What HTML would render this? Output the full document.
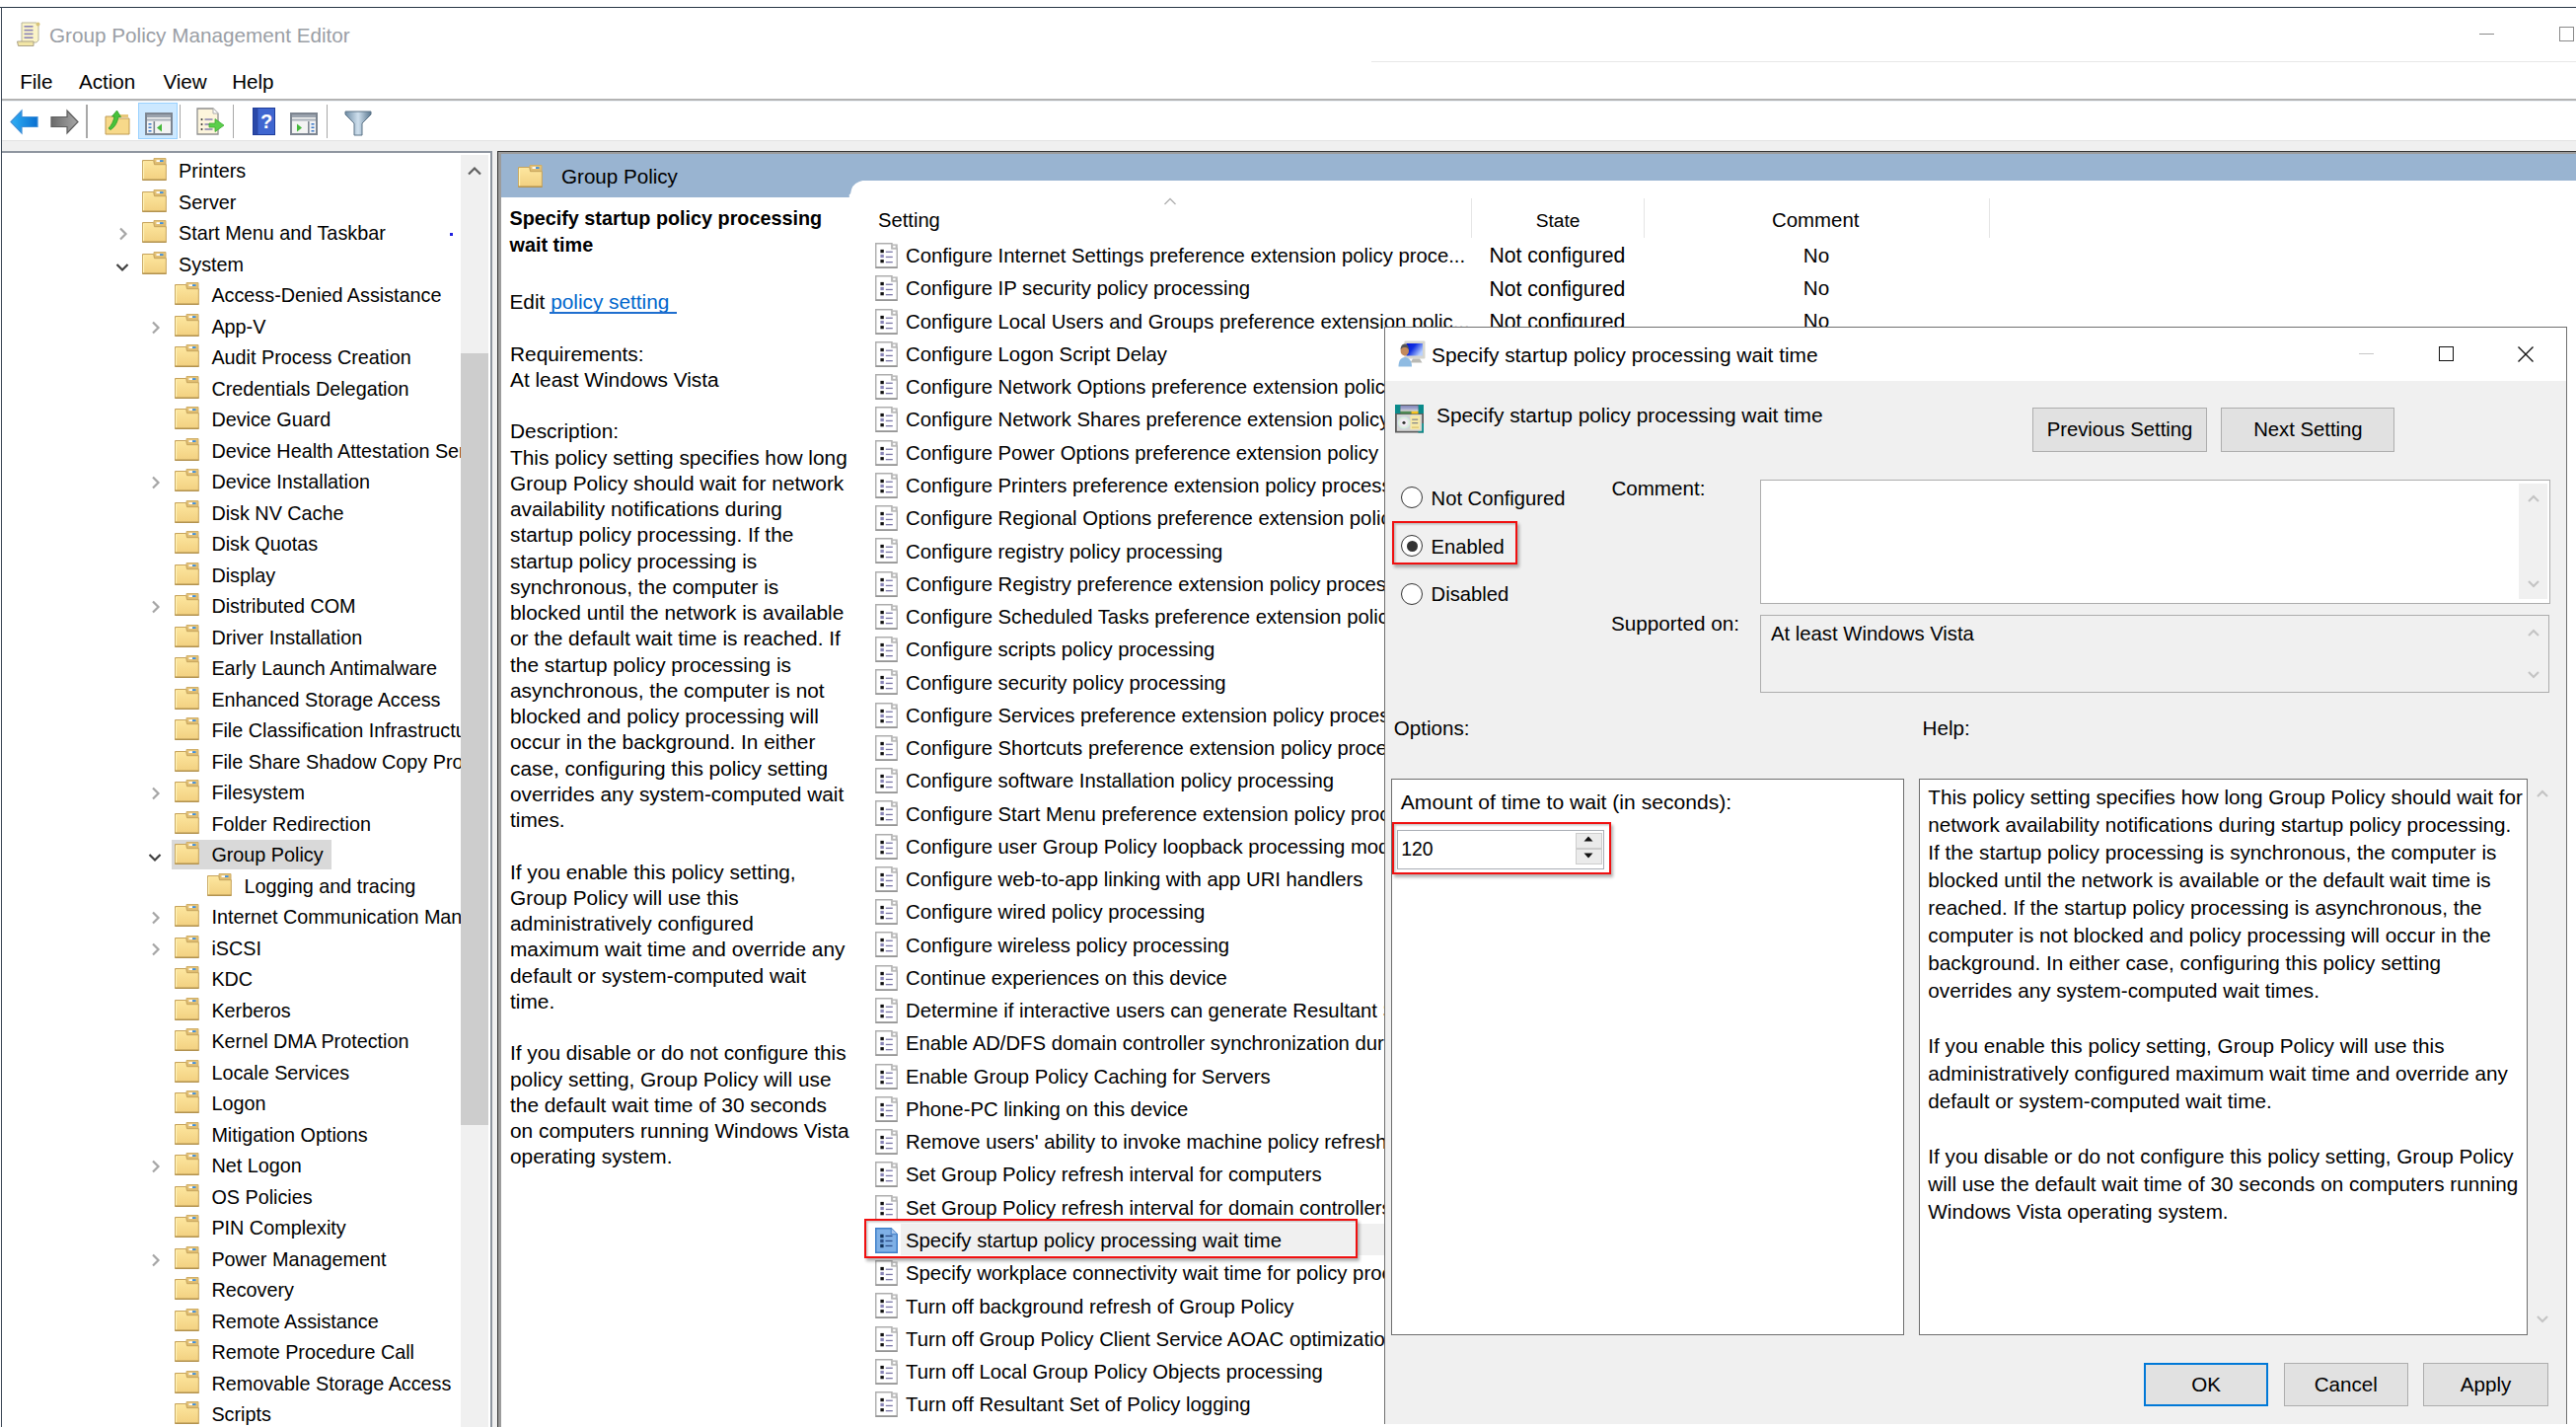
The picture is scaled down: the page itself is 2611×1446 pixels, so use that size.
<!DOCTYPE html>
<html><head><meta charset="utf-8"><style>
html,body{margin:0;padding:0;}
body{width:2611px;height:1446px;overflow:hidden;position:relative;background:#fff;font-family:"Liberation Sans", sans-serif;}
body div{position:absolute;}
.t{white-space:nowrap;}
.btn{background:#e1e1e1;box-sizing:border-box;text-align:center;color:#000;}
</style></head><body>

<svg width="0" height="0" style="position:absolute">
<defs>
<linearGradient id="fg" x1="0" y1="0" x2="0" y2="1"><stop offset="0" stop-color="#fde7a0"/><stop offset="1" stop-color="#f2d080"/></linearGradient>
<linearGradient id="ft" x1="0" y1="0" x2="0" y2="1"><stop offset="0" stop-color="#e9c77c"/><stop offset="1" stop-color="#d9b66a"/></linearGradient>
<symbol id="fold" viewBox="0 0 25 23">
 <path d="M12 0.5h12v8h-12z" fill="url(#ft)" stroke="#cfae68"/>
 <rect x="14.5" y="2.2" width="4" height="1.8" fill="#fff"/><rect x="18" y="2.2" width="3.5" height="1.8" fill="#3d8fe0"/>
 <path d="M0.5 2.5h11.2l0.8 4.2h11.8v15.8h-23.8z" fill="url(#fg)" stroke="#c6a35c"/>
 <path d="M1.5 4v17.5" stroke="#fff3b8" stroke-width="1.2"/>
 <path d="M0.5 22.2h24" stroke="#b0904f" stroke-width="1.4"/>
</symbol>
<symbol id="doc" viewBox="0 0 23 26">
 <path d="M0.75 0.75H17V5.8H22.25V25.25H0.75Z" fill="#fff" stroke="#adadad" stroke-width="1.4"/>
 <rect x="16.2" y="1.4" width="6.6" height="5" fill="#bababa"/><rect x="18.2" y="2.9" width="2.4" height="2" fill="#fff"/>
 <path d="M0.75 25.1h21.5" stroke="#929292" stroke-width="1.6"/>
 <rect x="5.4" y="6.9" width="3.4" height="3.3" fill="#111"/>
 <rect x="5.4" y="11.9" width="3.4" height="3.2" fill="#8a86b8"/>
 <rect x="5.4" y="17.1" width="3.4" height="3.2" fill="#111"/>
 <rect x="10.8" y="8.6" width="7" height="1.3" fill="#7c78a8"/>
 <rect x="10.8" y="13.8" width="7" height="1.3" fill="#7c78a8"/>
 <rect x="10.8" y="19" width="7" height="1.3" fill="#7c78a8"/>
</symbol>
<symbol id="docsel" viewBox="0 0 23 26">
 <path d="M0.75 0.75h15.5l6 6v18.5h-21.5z" fill="#7fb0e6" stroke="#3f7fc9" stroke-width="1.5"/>
 <path d="M16.2 0.75v5.8h6" fill="#a9c8ee" stroke="#4f88cc" stroke-width="1.2"/>
 <rect x="5.2" y="6.8" width="3.4" height="3.4" fill="#12325a"/>
 <rect x="5.2" y="11.8" width="3.4" height="3.4" fill="#2a4f88"/>
 <rect x="5.2" y="16.8" width="3.4" height="3.4" fill="#12325a"/>
 <rect x="10.5" y="7.8" width="7" height="1.3" fill="#2e4f8c"/>
 <rect x="10.5" y="12.8" width="7" height="1.3" fill="#2e4f8c"/>
 <rect x="10.5" y="17.8" width="7" height="1.3" fill="#2e4f8c"/>
</symbol>
<symbol id="chevR" viewBox="0 0 10 14"><path d="M2 1.5l5.5 5.5l-5.5 5.5" fill="none" stroke="#a6a6a6" stroke-width="2.2"/></symbol>
<symbol id="chevD" viewBox="0 0 14 10"><path d="M1.5 2l5.5 5.5l5.5-5.5" fill="none" stroke="#404040" stroke-width="2.2"/></symbol>
<symbol id="sUp" viewBox="0 0 16 10"><path d="M2 8.5l6-6l6 6" fill="none" stroke="#606060" stroke-width="2.2"/></symbol>
<symbol id="sUpL" viewBox="0 0 16 10"><path d="M3 8l5-5l5 5" fill="none" stroke="#c4c4c4" stroke-width="2.2"/></symbol>
<symbol id="sortUp" viewBox="0 0 16 10"><path d="M2.5 8l5.5-5.5l5.5 5.5" fill="none" stroke="#b0b0b0" stroke-width="1.3"/></symbol>
<symbol id="sDnL" viewBox="0 0 16 10"><path d="M3 2l5 5l5-5" fill="none" stroke="#c4c4c4" stroke-width="2.2"/></symbol>
</defs></svg>

<div style="left:0px;top:7px;width:2611px;height:1px;background:#2a3746"></div><div style="left:1px;top:7px;width:1px;height:1439px;background:#3a4654"></div><svg style="position:absolute;left:16px;top:21px;" width="27" height="27" viewBox="0 0 27 27">
<path d="M6 2h15l2 2v16l-2 2H6z" fill="#fbf4c8" stroke="#b9b59a" stroke-width="1"/>
<rect x="8.5" y="5" width="9" height="1.6" fill="#8b84b8"/><rect x="8.5" y="8.8" width="9" height="1.6" fill="#8b84b8"/>
<rect x="8.5" y="12.6" width="9" height="1.6" fill="#8b84b8"/><rect x="8.5" y="16.4" width="9" height="1.6" fill="#8b84b8"/>
<path d="M1.5 21h16.5v4.5H2.5z" fill="#f2e6a6" stroke="#aaa086" stroke-width="1"/>
<circle cx="22.5" cy="3.5" r="2" fill="#d8c47a"/>
</svg><div class="t" style="left:50px;top:23.91px;font-size:20.7px;line-height:24.84px;color:#9a9ea5;font-weight:400;">Group Policy Management Editor</div><div style="left:2513px;top:34px;width:15px;height:1px;background:#8a8a8a"></div><div style="left:2594px;top:27px;width:15px;height:15px;border:1.1px solid #8a8a8a;box-sizing:border-box"></div><div style="left:1390px;top:62px;width:1221px;height:1px;background:#e8e8e8"></div><div class="t" style="left:20.2px;top:70.50px;font-size:20.6px;line-height:24.72px;color:#000;font-weight:400;">File</div><div class="t" style="left:80px;top:70.50px;font-size:20.6px;line-height:24.72px;color:#000;font-weight:400;">Action</div><div class="t" style="left:165.4px;top:70.50px;font-size:20.6px;line-height:24.72px;color:#000;font-weight:400;">View</div><div class="t" style="left:235.2px;top:70.50px;font-size:20.6px;line-height:24.72px;color:#000;font-weight:400;">Help</div><div style="left:2px;top:100.3px;width:2609px;height:1.6px;background:#b3b3b3"></div><div style="left:2px;top:101.9px;width:2609px;height:1px;background:#eef2f8"></div><div style="left:140px;top:104px;width:40px;height:37px;background:#cce8ff;border:1px solid #99d1ff;box-sizing:border-box"></div><div style="left:87.25px;top:106px;width:1.5px;height:34px;background:#a8a8a8"></div><div style="left:181.75px;top:106px;width:1.5px;height:34px;background:#a8a8a8"></div><div style="left:235.95px;top:106px;width:1.5px;height:34px;background:#a8a8a8"></div><div style="left:330.65px;top:106px;width:1.5px;height:34px;background:#a8a8a8"></div><svg style="position:absolute;left:10px;top:110px;" width="30" height="27" viewBox="0 0 30 27"><defs><linearGradient id="ba" x1="0" y1="0" x2="1" y2="0"><stop offset="0" stop-color="#2fb0f5"/><stop offset="1" stop-color="#0a6fd0"/></linearGradient></defs>
<path d="M1 13.5L12 2v6.5h16v10H12V25z" fill="url(#ba)" stroke="#3f8fd8" stroke-width="1.2"/></svg><svg style="position:absolute;left:50px;top:110px;" width="30" height="27" viewBox="0 0 30 27"><defs><linearGradient id="fa" x1="0" y1="0" x2="1" y2="0"><stop offset="0" stop-color="#6a6a6a"/><stop offset="1" stop-color="#a8a8a8"/></linearGradient></defs>
<path d="M29 13.5L18 2v6.5H2v10h16V25z" fill="url(#fa)" stroke="#5f5f5f" stroke-width="1.2"/></svg><svg style="position:absolute;left:106px;top:111px;" width="26" height="27" viewBox="0 0 26 27"><path d="M1 7h9l1 2h14v16H1z" fill="#f7d98a" stroke="#bf9a52"/><rect x="14" y="5" width="10" height="3" fill="#e8c77a"/>
<path d="M4 19c3-3 5-7 6-12l-2.5 0l5-6l4 6.5h-2.5c-1 5-3 10-8 13z" fill="#47c23a" stroke="#2e9a26" stroke-width="0.8"/></svg><svg style="position:absolute;left:147px;top:114px;" width="28" height="23" viewBox="0 0 28 23"><rect x="1" y="1" width="26" height="21" fill="#f3f3f3" stroke="#7d8590" stroke-width="2"/>
<rect x="2" y="2" width="24" height="3" fill="#9aa2ad"/><rect x="2" y="6.5" width="24" height="2" fill="#aab1ba"/><rect x="8.5" y="9" width="1.6" height="12" fill="#7d8590"/><rect x="3.5" y="11" width="3" height="1.5" fill="#3a78c8"/><rect x="3.5" y="14.5" width="3" height="1.5" fill="#3a78c8"/><rect x="3.5" y="18" width="3" height="1.5" fill="#3a78c8"/><path d="M17 11.5v8l-5-4z" fill="#44b83a"/></svg><svg style="position:absolute;left:294px;top:114px;" width="28" height="23" viewBox="0 0 28 23"><rect x="1" y="1" width="26" height="21" fill="#f3f3f3" stroke="#7d8590" stroke-width="2"/>
<rect x="2" y="2" width="24" height="3" fill="#9aa2ad"/><rect x="2" y="6.5" width="24" height="2" fill="#aab1ba"/><rect x="18" y="9" width="1.6" height="12" fill="#7d8590"/><rect x="21.5" y="11" width="3" height="1.5" fill="#3a78c8"/><rect x="21.5" y="14.5" width="3" height="1.5" fill="#3a78c8"/><rect x="21.5" y="18" width="3" height="1.5" fill="#3a78c8"/><path d="M7 11.5v8l5-4z" fill="#44b83a"/></svg><svg style="position:absolute;left:199px;top:109px;" width="30" height="28" viewBox="0 0 30 28"><path d="M1 1h16l5 5v21H1z" fill="#fdf5dc" stroke="#8f8f8f" stroke-width="1.3"/><path d="M17 1v5h5" fill="#fff" stroke="#aaa"/>
<circle cx="5.5" cy="12" r="1" fill="#333"/><circle cx="5.5" cy="17" r="1" fill="#333"/><circle cx="5.5" cy="22" r="1" fill="#333"/>
<rect x="8.5" y="11.3" width="8" height="1.4" fill="#7c78a8"/><rect x="8.5" y="16.3" width="8" height="1.4" fill="#7c78a8"/><rect x="8.5" y="21.3" width="8" height="1.4" fill="#7c78a8"/>
<path d="M13 16h6v-4.5l9 6.5l-9 6.5V20h-6z" fill="#5ccf4c" stroke="#3aa82e" stroke-width="0.8"/></svg><svg style="position:absolute;left:256px;top:109px;" width="23" height="28" viewBox="0 0 23 28"><rect x="0.5" y="0.5" width="22" height="27" fill="#3f66d0" stroke="#1f3d9a"/><rect x="1" y="1" width="4.5" height="26" fill="#2a48a8"/>
<text x="14" y="21" font-family="Liberation Sans" font-size="20" font-weight="700" fill="#fff" text-anchor="middle">?</text></svg><svg style="position:absolute;left:349px;top:112px;" width="28" height="26" viewBox="0 0 28 26"><defs><linearGradient id="fl" x1="0" y1="0" x2="1" y2="0"><stop offset="0" stop-color="#6e8ca4"/><stop offset="0.5" stop-color="#cfe0ee"/><stop offset="1" stop-color="#5a7890"/></linearGradient></defs>
<path d="M1 1h26v3l-9 9v12h-8V13L1 4z" fill="url(#fl)" stroke="#5b7286" stroke-width="1"/></svg><div style="left:2px;top:142px;width:2609px;height:1px;background:#e3e3e3"></div><div style="left:2px;top:143px;width:2609px;height:10px;background:#f0f0f0"></div><div style="left:2px;top:153px;width:497px;height:2px;background:#8f96a0"></div><div style="left:497px;top:153px;width:2px;height:1293px;background:#8f96a0"></div><div style="left:499px;top:153px;width:5px;height:1293px;background:#f0f0f0"></div><div style="left:467px;top:157px;width:28px;height:1289px;background:#f0f0f0"></div><svg style="position:absolute;left:472.5px;top:167.5px" width="16" height="10" viewBox="0 0 16 10"><path d="M2 8.5l6-6l6 6" fill="none" stroke="#606060" stroke-width="2.2"/></svg><div style="left:467px;top:357.5px;width:28px;height:782.5px;background:#cdcdcd"></div><div style="left:456px;top:235.5px;width:3px;height:3px;background:#2020e0"></div><div style="left:2px;top:155px;width:465px;height:1291px;overflow:hidden"><svg style="position:absolute;left:141.7px;top:5.0px" width="25" height="23" viewBox="0 0 25 23"><path d="M12 0.5h12v8h-12z" fill="url(#ft)" stroke="#cfae68"/>
 <rect x="14.5" y="2.2" width="4" height="1.8" fill="#fff"/><rect x="18" y="2.2" width="3.5" height="1.8" fill="#3d8fe0"/>
 <path d="M0.5 2.5h11.2l0.8 4.2h11.8v15.8h-23.8z" fill="url(#fg)" stroke="#c6a35c"/>
 <path d="M1.5 4v17.5" stroke="#fff3b8" stroke-width="1.2"/>
 <path d="M0.5 22.2h24" stroke="#b0904f" stroke-width="1.4"/></svg><div class="t" style="left:179.1px;top:7.26px;font-size:19.8px;line-height:23.76px;color:#000;font-weight:400;">Printers</div><svg style="position:absolute;left:141.7px;top:36.5px" width="25" height="23" viewBox="0 0 25 23"><path d="M12 0.5h12v8h-12z" fill="url(#ft)" stroke="#cfae68"/>
 <rect x="14.5" y="2.2" width="4" height="1.8" fill="#fff"/><rect x="18" y="2.2" width="3.5" height="1.8" fill="#3d8fe0"/>
 <path d="M0.5 2.5h11.2l0.8 4.2h11.8v15.8h-23.8z" fill="url(#fg)" stroke="#c6a35c"/>
 <path d="M1.5 4v17.5" stroke="#fff3b8" stroke-width="1.2"/>
 <path d="M0.5 22.2h24" stroke="#b0904f" stroke-width="1.4"/></svg><div class="t" style="left:179.1px;top:38.76px;font-size:19.8px;line-height:23.76px;color:#000;font-weight:400;">Server</div><svg style="position:absolute;left:141.7px;top:68.0px" width="25" height="23" viewBox="0 0 25 23"><path d="M12 0.5h12v8h-12z" fill="url(#ft)" stroke="#cfae68"/>
 <rect x="14.5" y="2.2" width="4" height="1.8" fill="#fff"/><rect x="18" y="2.2" width="3.5" height="1.8" fill="#3d8fe0"/>
 <path d="M0.5 2.5h11.2l0.8 4.2h11.8v15.8h-23.8z" fill="url(#fg)" stroke="#c6a35c"/>
 <path d="M1.5 4v17.5" stroke="#fff3b8" stroke-width="1.2"/>
 <path d="M0.5 22.2h24" stroke="#b0904f" stroke-width="1.4"/></svg><div class="t" style="left:179.1px;top:70.26px;font-size:19.8px;line-height:23.76px;color:#000;font-weight:400;">Start Menu and Taskbar</div><svg style="position:absolute;left:117.49999999999999px;top:75.0px" width="10" height="14" viewBox="0 0 10 14"><path d="M2 1.5l5.5 5.5l-5.5 5.5" fill="none" stroke="#a6a6a6" stroke-width="2.2"/></svg><svg style="position:absolute;left:141.7px;top:99.5px" width="25" height="23" viewBox="0 0 25 23"><path d="M12 0.5h12v8h-12z" fill="url(#ft)" stroke="#cfae68"/>
 <rect x="14.5" y="2.2" width="4" height="1.8" fill="#fff"/><rect x="18" y="2.2" width="3.5" height="1.8" fill="#3d8fe0"/>
 <path d="M0.5 2.5h11.2l0.8 4.2h11.8v15.8h-23.8z" fill="url(#fg)" stroke="#c6a35c"/>
 <path d="M1.5 4v17.5" stroke="#fff3b8" stroke-width="1.2"/>
 <path d="M0.5 22.2h24" stroke="#b0904f" stroke-width="1.4"/></svg><div class="t" style="left:179.1px;top:101.76px;font-size:19.8px;line-height:23.76px;color:#000;font-weight:400;">System</div><svg style="position:absolute;left:114.49999999999999px;top:110.5px" width="14" height="10" viewBox="0 0 14 10"><path d="M1.5 2l5.5 5.5l5.5-5.5" fill="none" stroke="#404040" stroke-width="2.2"/></svg><svg style="position:absolute;left:175px;top:131.0px" width="25" height="23" viewBox="0 0 25 23"><path d="M12 0.5h12v8h-12z" fill="url(#ft)" stroke="#cfae68"/>
 <rect x="14.5" y="2.2" width="4" height="1.8" fill="#fff"/><rect x="18" y="2.2" width="3.5" height="1.8" fill="#3d8fe0"/>
 <path d="M0.5 2.5h11.2l0.8 4.2h11.8v15.8h-23.8z" fill="url(#fg)" stroke="#c6a35c"/>
 <path d="M1.5 4v17.5" stroke="#fff3b8" stroke-width="1.2"/>
 <path d="M0.5 22.2h24" stroke="#b0904f" stroke-width="1.4"/></svg><div class="t" style="left:212.4px;top:133.26px;font-size:19.8px;line-height:23.76px;color:#000;font-weight:400;">Access-Denied Assistance</div><svg style="position:absolute;left:175px;top:162.5px" width="25" height="23" viewBox="0 0 25 23"><path d="M12 0.5h12v8h-12z" fill="url(#ft)" stroke="#cfae68"/>
 <rect x="14.5" y="2.2" width="4" height="1.8" fill="#fff"/><rect x="18" y="2.2" width="3.5" height="1.8" fill="#3d8fe0"/>
 <path d="M0.5 2.5h11.2l0.8 4.2h11.8v15.8h-23.8z" fill="url(#fg)" stroke="#c6a35c"/>
 <path d="M1.5 4v17.5" stroke="#fff3b8" stroke-width="1.2"/>
 <path d="M0.5 22.2h24" stroke="#b0904f" stroke-width="1.4"/></svg><div class="t" style="left:212.4px;top:164.76px;font-size:19.8px;line-height:23.76px;color:#000;font-weight:400;">App-V</div><svg style="position:absolute;left:150.8px;top:169.5px" width="10" height="14" viewBox="0 0 10 14"><path d="M2 1.5l5.5 5.5l-5.5 5.5" fill="none" stroke="#a6a6a6" stroke-width="2.2"/></svg><svg style="position:absolute;left:175px;top:194.0px" width="25" height="23" viewBox="0 0 25 23"><path d="M12 0.5h12v8h-12z" fill="url(#ft)" stroke="#cfae68"/>
 <rect x="14.5" y="2.2" width="4" height="1.8" fill="#fff"/><rect x="18" y="2.2" width="3.5" height="1.8" fill="#3d8fe0"/>
 <path d="M0.5 2.5h11.2l0.8 4.2h11.8v15.8h-23.8z" fill="url(#fg)" stroke="#c6a35c"/>
 <path d="M1.5 4v17.5" stroke="#fff3b8" stroke-width="1.2"/>
 <path d="M0.5 22.2h24" stroke="#b0904f" stroke-width="1.4"/></svg><div class="t" style="left:212.4px;top:196.26px;font-size:19.8px;line-height:23.76px;color:#000;font-weight:400;">Audit Process Creation</div><svg style="position:absolute;left:175px;top:225.5px" width="25" height="23" viewBox="0 0 25 23"><path d="M12 0.5h12v8h-12z" fill="url(#ft)" stroke="#cfae68"/>
 <rect x="14.5" y="2.2" width="4" height="1.8" fill="#fff"/><rect x="18" y="2.2" width="3.5" height="1.8" fill="#3d8fe0"/>
 <path d="M0.5 2.5h11.2l0.8 4.2h11.8v15.8h-23.8z" fill="url(#fg)" stroke="#c6a35c"/>
 <path d="M1.5 4v17.5" stroke="#fff3b8" stroke-width="1.2"/>
 <path d="M0.5 22.2h24" stroke="#b0904f" stroke-width="1.4"/></svg><div class="t" style="left:212.4px;top:227.76px;font-size:19.8px;line-height:23.76px;color:#000;font-weight:400;">Credentials Delegation</div><svg style="position:absolute;left:175px;top:257.0px" width="25" height="23" viewBox="0 0 25 23"><path d="M12 0.5h12v8h-12z" fill="url(#ft)" stroke="#cfae68"/>
 <rect x="14.5" y="2.2" width="4" height="1.8" fill="#fff"/><rect x="18" y="2.2" width="3.5" height="1.8" fill="#3d8fe0"/>
 <path d="M0.5 2.5h11.2l0.8 4.2h11.8v15.8h-23.8z" fill="url(#fg)" stroke="#c6a35c"/>
 <path d="M1.5 4v17.5" stroke="#fff3b8" stroke-width="1.2"/>
 <path d="M0.5 22.2h24" stroke="#b0904f" stroke-width="1.4"/></svg><div class="t" style="left:212.4px;top:259.26px;font-size:19.8px;line-height:23.76px;color:#000;font-weight:400;">Device Guard</div><svg style="position:absolute;left:175px;top:288.5px" width="25" height="23" viewBox="0 0 25 23"><path d="M12 0.5h12v8h-12z" fill="url(#ft)" stroke="#cfae68"/>
 <rect x="14.5" y="2.2" width="4" height="1.8" fill="#fff"/><rect x="18" y="2.2" width="3.5" height="1.8" fill="#3d8fe0"/>
 <path d="M0.5 2.5h11.2l0.8 4.2h11.8v15.8h-23.8z" fill="url(#fg)" stroke="#c6a35c"/>
 <path d="M1.5 4v17.5" stroke="#fff3b8" stroke-width="1.2"/>
 <path d="M0.5 22.2h24" stroke="#b0904f" stroke-width="1.4"/></svg><div class="t" style="left:212.4px;top:290.76px;font-size:19.8px;line-height:23.76px;color:#000;font-weight:400;">Device Health Attestation Service</div><svg style="position:absolute;left:175px;top:320.0px" width="25" height="23" viewBox="0 0 25 23"><path d="M12 0.5h12v8h-12z" fill="url(#ft)" stroke="#cfae68"/>
 <rect x="14.5" y="2.2" width="4" height="1.8" fill="#fff"/><rect x="18" y="2.2" width="3.5" height="1.8" fill="#3d8fe0"/>
 <path d="M0.5 2.5h11.2l0.8 4.2h11.8v15.8h-23.8z" fill="url(#fg)" stroke="#c6a35c"/>
 <path d="M1.5 4v17.5" stroke="#fff3b8" stroke-width="1.2"/>
 <path d="M0.5 22.2h24" stroke="#b0904f" stroke-width="1.4"/></svg><div class="t" style="left:212.4px;top:322.26px;font-size:19.8px;line-height:23.76px;color:#000;font-weight:400;">Device Installation</div><svg style="position:absolute;left:150.8px;top:327.0px" width="10" height="14" viewBox="0 0 10 14"><path d="M2 1.5l5.5 5.5l-5.5 5.5" fill="none" stroke="#a6a6a6" stroke-width="2.2"/></svg><svg style="position:absolute;left:175px;top:351.5px" width="25" height="23" viewBox="0 0 25 23"><path d="M12 0.5h12v8h-12z" fill="url(#ft)" stroke="#cfae68"/>
 <rect x="14.5" y="2.2" width="4" height="1.8" fill="#fff"/><rect x="18" y="2.2" width="3.5" height="1.8" fill="#3d8fe0"/>
 <path d="M0.5 2.5h11.2l0.8 4.2h11.8v15.8h-23.8z" fill="url(#fg)" stroke="#c6a35c"/>
 <path d="M1.5 4v17.5" stroke="#fff3b8" stroke-width="1.2"/>
 <path d="M0.5 22.2h24" stroke="#b0904f" stroke-width="1.4"/></svg><div class="t" style="left:212.4px;top:353.76px;font-size:19.8px;line-height:23.76px;color:#000;font-weight:400;">Disk NV Cache</div><svg style="position:absolute;left:175px;top:383.0px" width="25" height="23" viewBox="0 0 25 23"><path d="M12 0.5h12v8h-12z" fill="url(#ft)" stroke="#cfae68"/>
 <rect x="14.5" y="2.2" width="4" height="1.8" fill="#fff"/><rect x="18" y="2.2" width="3.5" height="1.8" fill="#3d8fe0"/>
 <path d="M0.5 2.5h11.2l0.8 4.2h11.8v15.8h-23.8z" fill="url(#fg)" stroke="#c6a35c"/>
 <path d="M1.5 4v17.5" stroke="#fff3b8" stroke-width="1.2"/>
 <path d="M0.5 22.2h24" stroke="#b0904f" stroke-width="1.4"/></svg><div class="t" style="left:212.4px;top:385.26px;font-size:19.8px;line-height:23.76px;color:#000;font-weight:400;">Disk Quotas</div><svg style="position:absolute;left:175px;top:414.5px" width="25" height="23" viewBox="0 0 25 23"><path d="M12 0.5h12v8h-12z" fill="url(#ft)" stroke="#cfae68"/>
 <rect x="14.5" y="2.2" width="4" height="1.8" fill="#fff"/><rect x="18" y="2.2" width="3.5" height="1.8" fill="#3d8fe0"/>
 <path d="M0.5 2.5h11.2l0.8 4.2h11.8v15.8h-23.8z" fill="url(#fg)" stroke="#c6a35c"/>
 <path d="M1.5 4v17.5" stroke="#fff3b8" stroke-width="1.2"/>
 <path d="M0.5 22.2h24" stroke="#b0904f" stroke-width="1.4"/></svg><div class="t" style="left:212.4px;top:416.76px;font-size:19.8px;line-height:23.76px;color:#000;font-weight:400;">Display</div><svg style="position:absolute;left:175px;top:446.0px" width="25" height="23" viewBox="0 0 25 23"><path d="M12 0.5h12v8h-12z" fill="url(#ft)" stroke="#cfae68"/>
 <rect x="14.5" y="2.2" width="4" height="1.8" fill="#fff"/><rect x="18" y="2.2" width="3.5" height="1.8" fill="#3d8fe0"/>
 <path d="M0.5 2.5h11.2l0.8 4.2h11.8v15.8h-23.8z" fill="url(#fg)" stroke="#c6a35c"/>
 <path d="M1.5 4v17.5" stroke="#fff3b8" stroke-width="1.2"/>
 <path d="M0.5 22.2h24" stroke="#b0904f" stroke-width="1.4"/></svg><div class="t" style="left:212.4px;top:448.26px;font-size:19.8px;line-height:23.76px;color:#000;font-weight:400;">Distributed COM</div><svg style="position:absolute;left:150.8px;top:453.0px" width="10" height="14" viewBox="0 0 10 14"><path d="M2 1.5l5.5 5.5l-5.5 5.5" fill="none" stroke="#a6a6a6" stroke-width="2.2"/></svg><svg style="position:absolute;left:175px;top:477.5px" width="25" height="23" viewBox="0 0 25 23"><path d="M12 0.5h12v8h-12z" fill="url(#ft)" stroke="#cfae68"/>
 <rect x="14.5" y="2.2" width="4" height="1.8" fill="#fff"/><rect x="18" y="2.2" width="3.5" height="1.8" fill="#3d8fe0"/>
 <path d="M0.5 2.5h11.2l0.8 4.2h11.8v15.8h-23.8z" fill="url(#fg)" stroke="#c6a35c"/>
 <path d="M1.5 4v17.5" stroke="#fff3b8" stroke-width="1.2"/>
 <path d="M0.5 22.2h24" stroke="#b0904f" stroke-width="1.4"/></svg><div class="t" style="left:212.4px;top:479.76px;font-size:19.8px;line-height:23.76px;color:#000;font-weight:400;">Driver Installation</div><svg style="position:absolute;left:175px;top:509.0px" width="25" height="23" viewBox="0 0 25 23"><path d="M12 0.5h12v8h-12z" fill="url(#ft)" stroke="#cfae68"/>
 <rect x="14.5" y="2.2" width="4" height="1.8" fill="#fff"/><rect x="18" y="2.2" width="3.5" height="1.8" fill="#3d8fe0"/>
 <path d="M0.5 2.5h11.2l0.8 4.2h11.8v15.8h-23.8z" fill="url(#fg)" stroke="#c6a35c"/>
 <path d="M1.5 4v17.5" stroke="#fff3b8" stroke-width="1.2"/>
 <path d="M0.5 22.2h24" stroke="#b0904f" stroke-width="1.4"/></svg><div class="t" style="left:212.4px;top:511.26px;font-size:19.8px;line-height:23.76px;color:#000;font-weight:400;">Early Launch Antimalware</div><svg style="position:absolute;left:175px;top:540.5px" width="25" height="23" viewBox="0 0 25 23"><path d="M12 0.5h12v8h-12z" fill="url(#ft)" stroke="#cfae68"/>
 <rect x="14.5" y="2.2" width="4" height="1.8" fill="#fff"/><rect x="18" y="2.2" width="3.5" height="1.8" fill="#3d8fe0"/>
 <path d="M0.5 2.5h11.2l0.8 4.2h11.8v15.8h-23.8z" fill="url(#fg)" stroke="#c6a35c"/>
 <path d="M1.5 4v17.5" stroke="#fff3b8" stroke-width="1.2"/>
 <path d="M0.5 22.2h24" stroke="#b0904f" stroke-width="1.4"/></svg><div class="t" style="left:212.4px;top:542.76px;font-size:19.8px;line-height:23.76px;color:#000;font-weight:400;">Enhanced Storage Access</div><svg style="position:absolute;left:175px;top:572.0px" width="25" height="23" viewBox="0 0 25 23"><path d="M12 0.5h12v8h-12z" fill="url(#ft)" stroke="#cfae68"/>
 <rect x="14.5" y="2.2" width="4" height="1.8" fill="#fff"/><rect x="18" y="2.2" width="3.5" height="1.8" fill="#3d8fe0"/>
 <path d="M0.5 2.5h11.2l0.8 4.2h11.8v15.8h-23.8z" fill="url(#fg)" stroke="#c6a35c"/>
 <path d="M1.5 4v17.5" stroke="#fff3b8" stroke-width="1.2"/>
 <path d="M0.5 22.2h24" stroke="#b0904f" stroke-width="1.4"/></svg><div class="t" style="left:212.4px;top:574.26px;font-size:19.8px;line-height:23.76px;color:#000;font-weight:400;">File Classification Infrastructure</div><svg style="position:absolute;left:175px;top:603.5px" width="25" height="23" viewBox="0 0 25 23"><path d="M12 0.5h12v8h-12z" fill="url(#ft)" stroke="#cfae68"/>
 <rect x="14.5" y="2.2" width="4" height="1.8" fill="#fff"/><rect x="18" y="2.2" width="3.5" height="1.8" fill="#3d8fe0"/>
 <path d="M0.5 2.5h11.2l0.8 4.2h11.8v15.8h-23.8z" fill="url(#fg)" stroke="#c6a35c"/>
 <path d="M1.5 4v17.5" stroke="#fff3b8" stroke-width="1.2"/>
 <path d="M0.5 22.2h24" stroke="#b0904f" stroke-width="1.4"/></svg><div class="t" style="left:212.4px;top:605.76px;font-size:19.8px;line-height:23.76px;color:#000;font-weight:400;">File Share Shadow Copy Provider</div><svg style="position:absolute;left:175px;top:635.0px" width="25" height="23" viewBox="0 0 25 23"><path d="M12 0.5h12v8h-12z" fill="url(#ft)" stroke="#cfae68"/>
 <rect x="14.5" y="2.2" width="4" height="1.8" fill="#fff"/><rect x="18" y="2.2" width="3.5" height="1.8" fill="#3d8fe0"/>
 <path d="M0.5 2.5h11.2l0.8 4.2h11.8v15.8h-23.8z" fill="url(#fg)" stroke="#c6a35c"/>
 <path d="M1.5 4v17.5" stroke="#fff3b8" stroke-width="1.2"/>
 <path d="M0.5 22.2h24" stroke="#b0904f" stroke-width="1.4"/></svg><div class="t" style="left:212.4px;top:637.26px;font-size:19.8px;line-height:23.76px;color:#000;font-weight:400;">Filesystem</div><svg style="position:absolute;left:150.8px;top:642.0px" width="10" height="14" viewBox="0 0 10 14"><path d="M2 1.5l5.5 5.5l-5.5 5.5" fill="none" stroke="#a6a6a6" stroke-width="2.2"/></svg><svg style="position:absolute;left:175px;top:666.5px" width="25" height="23" viewBox="0 0 25 23"><path d="M12 0.5h12v8h-12z" fill="url(#ft)" stroke="#cfae68"/>
 <rect x="14.5" y="2.2" width="4" height="1.8" fill="#fff"/><rect x="18" y="2.2" width="3.5" height="1.8" fill="#3d8fe0"/>
 <path d="M0.5 2.5h11.2l0.8 4.2h11.8v15.8h-23.8z" fill="url(#fg)" stroke="#c6a35c"/>
 <path d="M1.5 4v17.5" stroke="#fff3b8" stroke-width="1.2"/>
 <path d="M0.5 22.2h24" stroke="#b0904f" stroke-width="1.4"/></svg><div class="t" style="left:212.4px;top:668.76px;font-size:19.8px;line-height:23.76px;color:#000;font-weight:400;">Folder Redirection</div><div style="left:171.7px;top:695.5px;width:162.3px;height:30.7px;background:#d9d9d9"></div><svg style="position:absolute;left:175px;top:698.0px" width="25" height="23" viewBox="0 0 25 23"><path d="M12 0.5h12v8h-12z" fill="url(#ft)" stroke="#cfae68"/>
 <rect x="14.5" y="2.2" width="4" height="1.8" fill="#fff"/><rect x="18" y="2.2" width="3.5" height="1.8" fill="#3d8fe0"/>
 <path d="M0.5 2.5h11.2l0.8 4.2h11.8v15.8h-23.8z" fill="url(#fg)" stroke="#c6a35c"/>
 <path d="M1.5 4v17.5" stroke="#fff3b8" stroke-width="1.2"/>
 <path d="M0.5 22.2h24" stroke="#b0904f" stroke-width="1.4"/></svg><div class="t" style="left:212.4px;top:700.26px;font-size:19.8px;line-height:23.76px;color:#000;font-weight:400;">Group Policy</div><svg style="position:absolute;left:147.8px;top:709.0px" width="14" height="10" viewBox="0 0 14 10"><path d="M1.5 2l5.5 5.5l5.5-5.5" fill="none" stroke="#404040" stroke-width="2.2"/></svg><svg style="position:absolute;left:208px;top:729.5px" width="25" height="23" viewBox="0 0 25 23"><path d="M12 0.5h12v8h-12z" fill="url(#ft)" stroke="#cfae68"/>
 <rect x="14.5" y="2.2" width="4" height="1.8" fill="#fff"/><rect x="18" y="2.2" width="3.5" height="1.8" fill="#3d8fe0"/>
 <path d="M0.5 2.5h11.2l0.8 4.2h11.8v15.8h-23.8z" fill="url(#fg)" stroke="#c6a35c"/>
 <path d="M1.5 4v17.5" stroke="#fff3b8" stroke-width="1.2"/>
 <path d="M0.5 22.2h24" stroke="#b0904f" stroke-width="1.4"/></svg><div class="t" style="left:245.4px;top:731.76px;font-size:19.8px;line-height:23.76px;color:#000;font-weight:400;">Logging and tracing</div><svg style="position:absolute;left:175px;top:761.0px" width="25" height="23" viewBox="0 0 25 23"><path d="M12 0.5h12v8h-12z" fill="url(#ft)" stroke="#cfae68"/>
 <rect x="14.5" y="2.2" width="4" height="1.8" fill="#fff"/><rect x="18" y="2.2" width="3.5" height="1.8" fill="#3d8fe0"/>
 <path d="M0.5 2.5h11.2l0.8 4.2h11.8v15.8h-23.8z" fill="url(#fg)" stroke="#c6a35c"/>
 <path d="M1.5 4v17.5" stroke="#fff3b8" stroke-width="1.2"/>
 <path d="M0.5 22.2h24" stroke="#b0904f" stroke-width="1.4"/></svg><div class="t" style="left:212.4px;top:763.26px;font-size:19.8px;line-height:23.76px;color:#000;font-weight:400;">Internet Communication Management</div><svg style="position:absolute;left:150.8px;top:768.0px" width="10" height="14" viewBox="0 0 10 14"><path d="M2 1.5l5.5 5.5l-5.5 5.5" fill="none" stroke="#a6a6a6" stroke-width="2.2"/></svg><svg style="position:absolute;left:175px;top:792.5px" width="25" height="23" viewBox="0 0 25 23"><path d="M12 0.5h12v8h-12z" fill="url(#ft)" stroke="#cfae68"/>
 <rect x="14.5" y="2.2" width="4" height="1.8" fill="#fff"/><rect x="18" y="2.2" width="3.5" height="1.8" fill="#3d8fe0"/>
 <path d="M0.5 2.5h11.2l0.8 4.2h11.8v15.8h-23.8z" fill="url(#fg)" stroke="#c6a35c"/>
 <path d="M1.5 4v17.5" stroke="#fff3b8" stroke-width="1.2"/>
 <path d="M0.5 22.2h24" stroke="#b0904f" stroke-width="1.4"/></svg><div class="t" style="left:212.4px;top:794.76px;font-size:19.8px;line-height:23.76px;color:#000;font-weight:400;">iSCSI</div><svg style="position:absolute;left:150.8px;top:799.5px" width="10" height="14" viewBox="0 0 10 14"><path d="M2 1.5l5.5 5.5l-5.5 5.5" fill="none" stroke="#a6a6a6" stroke-width="2.2"/></svg><svg style="position:absolute;left:175px;top:824.0px" width="25" height="23" viewBox="0 0 25 23"><path d="M12 0.5h12v8h-12z" fill="url(#ft)" stroke="#cfae68"/>
 <rect x="14.5" y="2.2" width="4" height="1.8" fill="#fff"/><rect x="18" y="2.2" width="3.5" height="1.8" fill="#3d8fe0"/>
 <path d="M0.5 2.5h11.2l0.8 4.2h11.8v15.8h-23.8z" fill="url(#fg)" stroke="#c6a35c"/>
 <path d="M1.5 4v17.5" stroke="#fff3b8" stroke-width="1.2"/>
 <path d="M0.5 22.2h24" stroke="#b0904f" stroke-width="1.4"/></svg><div class="t" style="left:212.4px;top:826.26px;font-size:19.8px;line-height:23.76px;color:#000;font-weight:400;">KDC</div><svg style="position:absolute;left:175px;top:855.5px" width="25" height="23" viewBox="0 0 25 23"><path d="M12 0.5h12v8h-12z" fill="url(#ft)" stroke="#cfae68"/>
 <rect x="14.5" y="2.2" width="4" height="1.8" fill="#fff"/><rect x="18" y="2.2" width="3.5" height="1.8" fill="#3d8fe0"/>
 <path d="M0.5 2.5h11.2l0.8 4.2h11.8v15.8h-23.8z" fill="url(#fg)" stroke="#c6a35c"/>
 <path d="M1.5 4v17.5" stroke="#fff3b8" stroke-width="1.2"/>
 <path d="M0.5 22.2h24" stroke="#b0904f" stroke-width="1.4"/></svg><div class="t" style="left:212.4px;top:857.76px;font-size:19.8px;line-height:23.76px;color:#000;font-weight:400;">Kerberos</div><svg style="position:absolute;left:175px;top:887.0px" width="25" height="23" viewBox="0 0 25 23"><path d="M12 0.5h12v8h-12z" fill="url(#ft)" stroke="#cfae68"/>
 <rect x="14.5" y="2.2" width="4" height="1.8" fill="#fff"/><rect x="18" y="2.2" width="3.5" height="1.8" fill="#3d8fe0"/>
 <path d="M0.5 2.5h11.2l0.8 4.2h11.8v15.8h-23.8z" fill="url(#fg)" stroke="#c6a35c"/>
 <path d="M1.5 4v17.5" stroke="#fff3b8" stroke-width="1.2"/>
 <path d="M0.5 22.2h24" stroke="#b0904f" stroke-width="1.4"/></svg><div class="t" style="left:212.4px;top:889.26px;font-size:19.8px;line-height:23.76px;color:#000;font-weight:400;">Kernel DMA Protection</div><svg style="position:absolute;left:175px;top:918.5px" width="25" height="23" viewBox="0 0 25 23"><path d="M12 0.5h12v8h-12z" fill="url(#ft)" stroke="#cfae68"/>
 <rect x="14.5" y="2.2" width="4" height="1.8" fill="#fff"/><rect x="18" y="2.2" width="3.5" height="1.8" fill="#3d8fe0"/>
 <path d="M0.5 2.5h11.2l0.8 4.2h11.8v15.8h-23.8z" fill="url(#fg)" stroke="#c6a35c"/>
 <path d="M1.5 4v17.5" stroke="#fff3b8" stroke-width="1.2"/>
 <path d="M0.5 22.2h24" stroke="#b0904f" stroke-width="1.4"/></svg><div class="t" style="left:212.4px;top:920.76px;font-size:19.8px;line-height:23.76px;color:#000;font-weight:400;">Locale Services</div><svg style="position:absolute;left:175px;top:950.0px" width="25" height="23" viewBox="0 0 25 23"><path d="M12 0.5h12v8h-12z" fill="url(#ft)" stroke="#cfae68"/>
 <rect x="14.5" y="2.2" width="4" height="1.8" fill="#fff"/><rect x="18" y="2.2" width="3.5" height="1.8" fill="#3d8fe0"/>
 <path d="M0.5 2.5h11.2l0.8 4.2h11.8v15.8h-23.8z" fill="url(#fg)" stroke="#c6a35c"/>
 <path d="M1.5 4v17.5" stroke="#fff3b8" stroke-width="1.2"/>
 <path d="M0.5 22.2h24" stroke="#b0904f" stroke-width="1.4"/></svg><div class="t" style="left:212.4px;top:952.26px;font-size:19.8px;line-height:23.76px;color:#000;font-weight:400;">Logon</div><svg style="position:absolute;left:175px;top:981.5px" width="25" height="23" viewBox="0 0 25 23"><path d="M12 0.5h12v8h-12z" fill="url(#ft)" stroke="#cfae68"/>
 <rect x="14.5" y="2.2" width="4" height="1.8" fill="#fff"/><rect x="18" y="2.2" width="3.5" height="1.8" fill="#3d8fe0"/>
 <path d="M0.5 2.5h11.2l0.8 4.2h11.8v15.8h-23.8z" fill="url(#fg)" stroke="#c6a35c"/>
 <path d="M1.5 4v17.5" stroke="#fff3b8" stroke-width="1.2"/>
 <path d="M0.5 22.2h24" stroke="#b0904f" stroke-width="1.4"/></svg><div class="t" style="left:212.4px;top:983.76px;font-size:19.8px;line-height:23.76px;color:#000;font-weight:400;">Mitigation Options</div><svg style="position:absolute;left:175px;top:1013.0px" width="25" height="23" viewBox="0 0 25 23"><path d="M12 0.5h12v8h-12z" fill="url(#ft)" stroke="#cfae68"/>
 <rect x="14.5" y="2.2" width="4" height="1.8" fill="#fff"/><rect x="18" y="2.2" width="3.5" height="1.8" fill="#3d8fe0"/>
 <path d="M0.5 2.5h11.2l0.8 4.2h11.8v15.8h-23.8z" fill="url(#fg)" stroke="#c6a35c"/>
 <path d="M1.5 4v17.5" stroke="#fff3b8" stroke-width="1.2"/>
 <path d="M0.5 22.2h24" stroke="#b0904f" stroke-width="1.4"/></svg><div class="t" style="left:212.4px;top:1015.26px;font-size:19.8px;line-height:23.76px;color:#000;font-weight:400;">Net Logon</div><svg style="position:absolute;left:150.8px;top:1020.0px" width="10" height="14" viewBox="0 0 10 14"><path d="M2 1.5l5.5 5.5l-5.5 5.5" fill="none" stroke="#a6a6a6" stroke-width="2.2"/></svg><svg style="position:absolute;left:175px;top:1044.5px" width="25" height="23" viewBox="0 0 25 23"><path d="M12 0.5h12v8h-12z" fill="url(#ft)" stroke="#cfae68"/>
 <rect x="14.5" y="2.2" width="4" height="1.8" fill="#fff"/><rect x="18" y="2.2" width="3.5" height="1.8" fill="#3d8fe0"/>
 <path d="M0.5 2.5h11.2l0.8 4.2h11.8v15.8h-23.8z" fill="url(#fg)" stroke="#c6a35c"/>
 <path d="M1.5 4v17.5" stroke="#fff3b8" stroke-width="1.2"/>
 <path d="M0.5 22.2h24" stroke="#b0904f" stroke-width="1.4"/></svg><div class="t" style="left:212.4px;top:1046.76px;font-size:19.8px;line-height:23.76px;color:#000;font-weight:400;">OS Policies</div><svg style="position:absolute;left:175px;top:1076.0px" width="25" height="23" viewBox="0 0 25 23"><path d="M12 0.5h12v8h-12z" fill="url(#ft)" stroke="#cfae68"/>
 <rect x="14.5" y="2.2" width="4" height="1.8" fill="#fff"/><rect x="18" y="2.2" width="3.5" height="1.8" fill="#3d8fe0"/>
 <path d="M0.5 2.5h11.2l0.8 4.2h11.8v15.8h-23.8z" fill="url(#fg)" stroke="#c6a35c"/>
 <path d="M1.5 4v17.5" stroke="#fff3b8" stroke-width="1.2"/>
 <path d="M0.5 22.2h24" stroke="#b0904f" stroke-width="1.4"/></svg><div class="t" style="left:212.4px;top:1078.26px;font-size:19.8px;line-height:23.76px;color:#000;font-weight:400;">PIN Complexity</div><svg style="position:absolute;left:175px;top:1107.5px" width="25" height="23" viewBox="0 0 25 23"><path d="M12 0.5h12v8h-12z" fill="url(#ft)" stroke="#cfae68"/>
 <rect x="14.5" y="2.2" width="4" height="1.8" fill="#fff"/><rect x="18" y="2.2" width="3.5" height="1.8" fill="#3d8fe0"/>
 <path d="M0.5 2.5h11.2l0.8 4.2h11.8v15.8h-23.8z" fill="url(#fg)" stroke="#c6a35c"/>
 <path d="M1.5 4v17.5" stroke="#fff3b8" stroke-width="1.2"/>
 <path d="M0.5 22.2h24" stroke="#b0904f" stroke-width="1.4"/></svg><div class="t" style="left:212.4px;top:1109.76px;font-size:19.8px;line-height:23.76px;color:#000;font-weight:400;">Power Management</div><svg style="position:absolute;left:150.8px;top:1114.5px" width="10" height="14" viewBox="0 0 10 14"><path d="M2 1.5l5.5 5.5l-5.5 5.5" fill="none" stroke="#a6a6a6" stroke-width="2.2"/></svg><svg style="position:absolute;left:175px;top:1139.0px" width="25" height="23" viewBox="0 0 25 23"><path d="M12 0.5h12v8h-12z" fill="url(#ft)" stroke="#cfae68"/>
 <rect x="14.5" y="2.2" width="4" height="1.8" fill="#fff"/><rect x="18" y="2.2" width="3.5" height="1.8" fill="#3d8fe0"/>
 <path d="M0.5 2.5h11.2l0.8 4.2h11.8v15.8h-23.8z" fill="url(#fg)" stroke="#c6a35c"/>
 <path d="M1.5 4v17.5" stroke="#fff3b8" stroke-width="1.2"/>
 <path d="M0.5 22.2h24" stroke="#b0904f" stroke-width="1.4"/></svg><div class="t" style="left:212.4px;top:1141.26px;font-size:19.8px;line-height:23.76px;color:#000;font-weight:400;">Recovery</div><svg style="position:absolute;left:175px;top:1170.5px" width="25" height="23" viewBox="0 0 25 23"><path d="M12 0.5h12v8h-12z" fill="url(#ft)" stroke="#cfae68"/>
 <rect x="14.5" y="2.2" width="4" height="1.8" fill="#fff"/><rect x="18" y="2.2" width="3.5" height="1.8" fill="#3d8fe0"/>
 <path d="M0.5 2.5h11.2l0.8 4.2h11.8v15.8h-23.8z" fill="url(#fg)" stroke="#c6a35c"/>
 <path d="M1.5 4v17.5" stroke="#fff3b8" stroke-width="1.2"/>
 <path d="M0.5 22.2h24" stroke="#b0904f" stroke-width="1.4"/></svg><div class="t" style="left:212.4px;top:1172.76px;font-size:19.8px;line-height:23.76px;color:#000;font-weight:400;">Remote Assistance</div><svg style="position:absolute;left:175px;top:1202.0px" width="25" height="23" viewBox="0 0 25 23"><path d="M12 0.5h12v8h-12z" fill="url(#ft)" stroke="#cfae68"/>
 <rect x="14.5" y="2.2" width="4" height="1.8" fill="#fff"/><rect x="18" y="2.2" width="3.5" height="1.8" fill="#3d8fe0"/>
 <path d="M0.5 2.5h11.2l0.8 4.2h11.8v15.8h-23.8z" fill="url(#fg)" stroke="#c6a35c"/>
 <path d="M1.5 4v17.5" stroke="#fff3b8" stroke-width="1.2"/>
 <path d="M0.5 22.2h24" stroke="#b0904f" stroke-width="1.4"/></svg><div class="t" style="left:212.4px;top:1204.26px;font-size:19.8px;line-height:23.76px;color:#000;font-weight:400;">Remote Procedure Call</div><svg style="position:absolute;left:175px;top:1233.5px" width="25" height="23" viewBox="0 0 25 23"><path d="M12 0.5h12v8h-12z" fill="url(#ft)" stroke="#cfae68"/>
 <rect x="14.5" y="2.2" width="4" height="1.8" fill="#fff"/><rect x="18" y="2.2" width="3.5" height="1.8" fill="#3d8fe0"/>
 <path d="M0.5 2.5h11.2l0.8 4.2h11.8v15.8h-23.8z" fill="url(#fg)" stroke="#c6a35c"/>
 <path d="M1.5 4v17.5" stroke="#fff3b8" stroke-width="1.2"/>
 <path d="M0.5 22.2h24" stroke="#b0904f" stroke-width="1.4"/></svg><div class="t" style="left:212.4px;top:1235.76px;font-size:19.8px;line-height:23.76px;color:#000;font-weight:400;">Removable Storage Access</div><svg style="position:absolute;left:175px;top:1265.0px" width="25" height="23" viewBox="0 0 25 23"><path d="M12 0.5h12v8h-12z" fill="url(#ft)" stroke="#cfae68"/>
 <rect x="14.5" y="2.2" width="4" height="1.8" fill="#fff"/><rect x="18" y="2.2" width="3.5" height="1.8" fill="#3d8fe0"/>
 <path d="M0.5 2.5h11.2l0.8 4.2h11.8v15.8h-23.8z" fill="url(#fg)" stroke="#c6a35c"/>
 <path d="M1.5 4v17.5" stroke="#fff3b8" stroke-width="1.2"/>
 <path d="M0.5 22.2h24" stroke="#b0904f" stroke-width="1.4"/></svg><div class="t" style="left:212.4px;top:1267.26px;font-size:19.8px;line-height:23.76px;color:#000;font-weight:400;">Scripts</div></div><div style="left:504px;top:153px;width:2107px;height:1px;background:#363636"></div><div style="left:504px;top:153px;width:1px;height:1293px;background:#363636"></div><div style="left:505px;top:154px;width:2106px;height:2px;background:#9c9c9c"></div><div style="left:505px;top:154px;width:3px;height:1292px;background:#9c9c9c"></div><div style="left:508px;top:156px;width:2103px;height:27px;background:#99b4d1"></div><svg style="position:absolute;left:508px;top:182px;" width="380" height="18" viewBox="0 0 380 18"><path d="M0 0H370L367 0.8Q357 3 355 10L354 14.5L352.8 15V18H0z" fill="#99b4d1"/></svg><svg style="position:absolute;left:525px;top:167px" width="25" height="23" viewBox="0 0 25 23"><path d="M12 0.5h12v8h-12z" fill="url(#ft)" stroke="#cfae68"/>
 <rect x="14.5" y="2.2" width="4" height="1.8" fill="#fff"/><rect x="18" y="2.2" width="3.5" height="1.8" fill="#3d8fe0"/>
 <path d="M0.5 2.5h11.2l0.8 4.2h11.8v15.8h-23.8z" fill="url(#fg)" stroke="#c6a35c"/>
 <path d="M1.5 4v17.5" stroke="#fff3b8" stroke-width="1.2"/>
 <path d="M0.5 22.2h24" stroke="#b0904f" stroke-width="1.4"/></svg><div class="t" style="left:569px;top:166.50px;font-size:20.6px;line-height:24.72px;color:#000;font-weight:400;">Group Policy</div><div class="t" style="left:516.5px;top:210.26px;font-size:19.8px;line-height:23.76px;color:#000;font-weight:700;">Specify startup policy processing</div><div class="t" style="left:516.5px;top:237.06px;font-size:19.8px;line-height:23.76px;color:#000;font-weight:700;">wait time</div><div class="t" style="left:516.5px;top:293.91px;font-size:20.8px;line-height:24.96px;color:#000;font-weight:400;">Edit <span style="color:#0066cc">policy setting</span></div><div style="left:557px;top:316px;width:129px;height:1.7px;background:#1f6fcf"></div><div class="t" style="left:517px;top:345.55px;font-size:20.85px;line-height:26.25px;color:#000;">Requirements:<br>At least Windows Vista<br>&nbsp;<br>Description:<br>This policy setting specifies how long<br>Group Policy should wait for network<br>availability notifications during<br>startup policy processing. If the<br>startup policy processing is<br>synchronous, the computer is<br>blocked until the network is available<br>or the default wait time is reached. If<br>the startup policy processing is<br>asynchronous, the computer is not<br>blocked and policy processing will<br>occur in the background. In either<br>case, configuring this policy setting<br>overrides any system-computed wait<br>times.<br>&nbsp;<br>If you enable this policy setting,<br>Group Policy will use this<br>administratively configured<br>maximum wait time and override any<br>default or system-computed wait<br>time.<br>&nbsp;<br>If you disable or do not configure this<br>policy setting, Group Policy will use<br>the default wait time of 30 seconds<br>on computers running Windows Vista<br>operating system.</div><div class="t" style="left:890px;top:210.58px;font-size:20.2px;line-height:24.24px;color:#000;font-weight:400;">Setting</div><svg style="position:absolute;left:1177.5px;top:198.5px" width="16" height="10" viewBox="0 0 16 10"><path d="M2.5 8l5.5-5.5l5.5 5.5" fill="none" stroke="#b0b0b0" stroke-width="1.3"/></svg><div style="left:1491px;top:200.5px;width:1px;height:40.5px;background:#e5e5e5"></div><div style="left:1666px;top:200.5px;width:1px;height:40.5px;background:#e5e5e5"></div><div style="left:2016px;top:200.5px;width:1px;height:40.5px;background:#e5e5e5"></div><div class="t" style="left:1556.7px;top:211.83px;font-size:19.2px;line-height:23.04px;color:#000;font-weight:400;">State</div><div class="t" style="left:1796px;top:210.69px;font-size:20.4px;line-height:24.48px;color:#000;font-weight:400;">Comment</div><svg style="position:absolute;left:887px;top:245.99999999999997px" width="23" height="26" viewBox="0 0 23 26"><path d="M0.75 0.75H17V5.8H22.25V25.25H0.75Z" fill="#fff" stroke="#adadad" stroke-width="1.4"/>
 <rect x="16.2" y="1.4" width="6.6" height="5" fill="#bababa"/><rect x="18.2" y="2.9" width="2.4" height="2" fill="#fff"/>
 <path d="M0.75 25.1h21.5" stroke="#929292" stroke-width="1.6"/>
 <rect x="5.4" y="6.9" width="3.4" height="3.3" fill="#111"/>
 <rect x="5.4" y="11.9" width="3.4" height="3.2" fill="#8a86b8"/>
 <rect x="5.4" y="17.1" width="3.4" height="3.2" fill="#111"/>
 <rect x="10.8" y="8.6" width="7" height="1.3" fill="#7c78a8"/>
 <rect x="10.8" y="13.8" width="7" height="1.3" fill="#7c78a8"/>
 <rect x="10.8" y="19" width="7" height="1.3" fill="#7c78a8"/></svg><div class="t" style="left:918px;top:247.19px;font-size:20.3px;line-height:24.36px;color:#000;font-weight:400;">Configure Internet Settings preference extension policy proce...</div><div class="t" style="left:1509.4px;top:246.33px;font-size:21.2px;line-height:25.44px;color:#000;font-weight:400;">Not configured</div><div class="t" style="left:1827.8px;top:246.90px;font-size:20.6px;line-height:24.72px;color:#000;font-weight:400;">No</div><svg style="position:absolute;left:887px;top:279.26px" width="23" height="26" viewBox="0 0 23 26"><path d="M0.75 0.75H17V5.8H22.25V25.25H0.75Z" fill="#fff" stroke="#adadad" stroke-width="1.4"/>
 <rect x="16.2" y="1.4" width="6.6" height="5" fill="#bababa"/><rect x="18.2" y="2.9" width="2.4" height="2" fill="#fff"/>
 <path d="M0.75 25.1h21.5" stroke="#929292" stroke-width="1.6"/>
 <rect x="5.4" y="6.9" width="3.4" height="3.3" fill="#111"/>
 <rect x="5.4" y="11.9" width="3.4" height="3.2" fill="#8a86b8"/>
 <rect x="5.4" y="17.1" width="3.4" height="3.2" fill="#111"/>
 <rect x="10.8" y="8.6" width="7" height="1.3" fill="#7c78a8"/>
 <rect x="10.8" y="13.8" width="7" height="1.3" fill="#7c78a8"/>
 <rect x="10.8" y="19" width="7" height="1.3" fill="#7c78a8"/></svg><div class="t" style="left:918px;top:280.45px;font-size:20.3px;line-height:24.36px;color:#000;font-weight:400;">Configure IP security policy processing</div><div class="t" style="left:1509.4px;top:279.59px;font-size:21.2px;line-height:25.44px;color:#000;font-weight:400;">Not configured</div><div class="t" style="left:1827.8px;top:280.16px;font-size:20.6px;line-height:24.72px;color:#000;font-weight:400;">No</div><svg style="position:absolute;left:887px;top:312.52px" width="23" height="26" viewBox="0 0 23 26"><path d="M0.75 0.75H17V5.8H22.25V25.25H0.75Z" fill="#fff" stroke="#adadad" stroke-width="1.4"/>
 <rect x="16.2" y="1.4" width="6.6" height="5" fill="#bababa"/><rect x="18.2" y="2.9" width="2.4" height="2" fill="#fff"/>
 <path d="M0.75 25.1h21.5" stroke="#929292" stroke-width="1.6"/>
 <rect x="5.4" y="6.9" width="3.4" height="3.3" fill="#111"/>
 <rect x="5.4" y="11.9" width="3.4" height="3.2" fill="#8a86b8"/>
 <rect x="5.4" y="17.1" width="3.4" height="3.2" fill="#111"/>
 <rect x="10.8" y="8.6" width="7" height="1.3" fill="#7c78a8"/>
 <rect x="10.8" y="13.8" width="7" height="1.3" fill="#7c78a8"/>
 <rect x="10.8" y="19" width="7" height="1.3" fill="#7c78a8"/></svg><div class="t" style="left:918px;top:313.71px;font-size:20.3px;line-height:24.36px;color:#000;font-weight:400;">Configure Local Users and Groups preference extension polic...</div><div class="t" style="left:1509.4px;top:312.85px;font-size:21.2px;line-height:25.44px;color:#000;font-weight:400;">Not configured</div><div class="t" style="left:1827.8px;top:313.42px;font-size:20.6px;line-height:24.72px;color:#000;font-weight:400;">No</div><svg style="position:absolute;left:887px;top:345.78px" width="23" height="26" viewBox="0 0 23 26"><path d="M0.75 0.75H17V5.8H22.25V25.25H0.75Z" fill="#fff" stroke="#adadad" stroke-width="1.4"/>
 <rect x="16.2" y="1.4" width="6.6" height="5" fill="#bababa"/><rect x="18.2" y="2.9" width="2.4" height="2" fill="#fff"/>
 <path d="M0.75 25.1h21.5" stroke="#929292" stroke-width="1.6"/>
 <rect x="5.4" y="6.9" width="3.4" height="3.3" fill="#111"/>
 <rect x="5.4" y="11.9" width="3.4" height="3.2" fill="#8a86b8"/>
 <rect x="5.4" y="17.1" width="3.4" height="3.2" fill="#111"/>
 <rect x="10.8" y="8.6" width="7" height="1.3" fill="#7c78a8"/>
 <rect x="10.8" y="13.8" width="7" height="1.3" fill="#7c78a8"/>
 <rect x="10.8" y="19" width="7" height="1.3" fill="#7c78a8"/></svg><div class="t" style="left:918px;top:346.97px;font-size:20.3px;line-height:24.36px;color:#000;font-weight:400;">Configure Logon Script Delay</div><svg style="position:absolute;left:887px;top:379.03999999999996px" width="23" height="26" viewBox="0 0 23 26"><path d="M0.75 0.75H17V5.8H22.25V25.25H0.75Z" fill="#fff" stroke="#adadad" stroke-width="1.4"/>
 <rect x="16.2" y="1.4" width="6.6" height="5" fill="#bababa"/><rect x="18.2" y="2.9" width="2.4" height="2" fill="#fff"/>
 <path d="M0.75 25.1h21.5" stroke="#929292" stroke-width="1.6"/>
 <rect x="5.4" y="6.9" width="3.4" height="3.3" fill="#111"/>
 <rect x="5.4" y="11.9" width="3.4" height="3.2" fill="#8a86b8"/>
 <rect x="5.4" y="17.1" width="3.4" height="3.2" fill="#111"/>
 <rect x="10.8" y="8.6" width="7" height="1.3" fill="#7c78a8"/>
 <rect x="10.8" y="13.8" width="7" height="1.3" fill="#7c78a8"/>
 <rect x="10.8" y="19" width="7" height="1.3" fill="#7c78a8"/></svg><div class="t" style="left:918px;top:380.23px;font-size:20.3px;line-height:24.36px;color:#000;font-weight:400;">Configure Network Options preference extension policy processing</div><svg style="position:absolute;left:887px;top:412.29999999999995px" width="23" height="26" viewBox="0 0 23 26"><path d="M0.75 0.75H17V5.8H22.25V25.25H0.75Z" fill="#fff" stroke="#adadad" stroke-width="1.4"/>
 <rect x="16.2" y="1.4" width="6.6" height="5" fill="#bababa"/><rect x="18.2" y="2.9" width="2.4" height="2" fill="#fff"/>
 <path d="M0.75 25.1h21.5" stroke="#929292" stroke-width="1.6"/>
 <rect x="5.4" y="6.9" width="3.4" height="3.3" fill="#111"/>
 <rect x="5.4" y="11.9" width="3.4" height="3.2" fill="#8a86b8"/>
 <rect x="5.4" y="17.1" width="3.4" height="3.2" fill="#111"/>
 <rect x="10.8" y="8.6" width="7" height="1.3" fill="#7c78a8"/>
 <rect x="10.8" y="13.8" width="7" height="1.3" fill="#7c78a8"/>
 <rect x="10.8" y="19" width="7" height="1.3" fill="#7c78a8"/></svg><div class="t" style="left:918px;top:413.49px;font-size:20.3px;line-height:24.36px;color:#000;font-weight:400;">Configure Network Shares preference extension policy processing</div><svg style="position:absolute;left:887px;top:445.56px" width="23" height="26" viewBox="0 0 23 26"><path d="M0.75 0.75H17V5.8H22.25V25.25H0.75Z" fill="#fff" stroke="#adadad" stroke-width="1.4"/>
 <rect x="16.2" y="1.4" width="6.6" height="5" fill="#bababa"/><rect x="18.2" y="2.9" width="2.4" height="2" fill="#fff"/>
 <path d="M0.75 25.1h21.5" stroke="#929292" stroke-width="1.6"/>
 <rect x="5.4" y="6.9" width="3.4" height="3.3" fill="#111"/>
 <rect x="5.4" y="11.9" width="3.4" height="3.2" fill="#8a86b8"/>
 <rect x="5.4" y="17.1" width="3.4" height="3.2" fill="#111"/>
 <rect x="10.8" y="8.6" width="7" height="1.3" fill="#7c78a8"/>
 <rect x="10.8" y="13.8" width="7" height="1.3" fill="#7c78a8"/>
 <rect x="10.8" y="19" width="7" height="1.3" fill="#7c78a8"/></svg><div class="t" style="left:918px;top:446.75px;font-size:20.3px;line-height:24.36px;color:#000;font-weight:400;">Configure Power Options preference extension policy processing</div><svg style="position:absolute;left:887px;top:478.82px" width="23" height="26" viewBox="0 0 23 26"><path d="M0.75 0.75H17V5.8H22.25V25.25H0.75Z" fill="#fff" stroke="#adadad" stroke-width="1.4"/>
 <rect x="16.2" y="1.4" width="6.6" height="5" fill="#bababa"/><rect x="18.2" y="2.9" width="2.4" height="2" fill="#fff"/>
 <path d="M0.75 25.1h21.5" stroke="#929292" stroke-width="1.6"/>
 <rect x="5.4" y="6.9" width="3.4" height="3.3" fill="#111"/>
 <rect x="5.4" y="11.9" width="3.4" height="3.2" fill="#8a86b8"/>
 <rect x="5.4" y="17.1" width="3.4" height="3.2" fill="#111"/>
 <rect x="10.8" y="8.6" width="7" height="1.3" fill="#7c78a8"/>
 <rect x="10.8" y="13.8" width="7" height="1.3" fill="#7c78a8"/>
 <rect x="10.8" y="19" width="7" height="1.3" fill="#7c78a8"/></svg><div class="t" style="left:918px;top:480.01px;font-size:20.3px;line-height:24.36px;color:#000;font-weight:400;">Configure Printers preference extension policy processing</div><svg style="position:absolute;left:887px;top:512.08px" width="23" height="26" viewBox="0 0 23 26"><path d="M0.75 0.75H17V5.8H22.25V25.25H0.75Z" fill="#fff" stroke="#adadad" stroke-width="1.4"/>
 <rect x="16.2" y="1.4" width="6.6" height="5" fill="#bababa"/><rect x="18.2" y="2.9" width="2.4" height="2" fill="#fff"/>
 <path d="M0.75 25.1h21.5" stroke="#929292" stroke-width="1.6"/>
 <rect x="5.4" y="6.9" width="3.4" height="3.3" fill="#111"/>
 <rect x="5.4" y="11.9" width="3.4" height="3.2" fill="#8a86b8"/>
 <rect x="5.4" y="17.1" width="3.4" height="3.2" fill="#111"/>
 <rect x="10.8" y="8.6" width="7" height="1.3" fill="#7c78a8"/>
 <rect x="10.8" y="13.8" width="7" height="1.3" fill="#7c78a8"/>
 <rect x="10.8" y="19" width="7" height="1.3" fill="#7c78a8"/></svg><div class="t" style="left:918px;top:513.27px;font-size:20.3px;line-height:24.36px;color:#000;font-weight:400;">Configure Regional Options preference extension policy processing</div><svg style="position:absolute;left:887px;top:545.34px" width="23" height="26" viewBox="0 0 23 26"><path d="M0.75 0.75H17V5.8H22.25V25.25H0.75Z" fill="#fff" stroke="#adadad" stroke-width="1.4"/>
 <rect x="16.2" y="1.4" width="6.6" height="5" fill="#bababa"/><rect x="18.2" y="2.9" width="2.4" height="2" fill="#fff"/>
 <path d="M0.75 25.1h21.5" stroke="#929292" stroke-width="1.6"/>
 <rect x="5.4" y="6.9" width="3.4" height="3.3" fill="#111"/>
 <rect x="5.4" y="11.9" width="3.4" height="3.2" fill="#8a86b8"/>
 <rect x="5.4" y="17.1" width="3.4" height="3.2" fill="#111"/>
 <rect x="10.8" y="8.6" width="7" height="1.3" fill="#7c78a8"/>
 <rect x="10.8" y="13.8" width="7" height="1.3" fill="#7c78a8"/>
 <rect x="10.8" y="19" width="7" height="1.3" fill="#7c78a8"/></svg><div class="t" style="left:918px;top:546.53px;font-size:20.3px;line-height:24.36px;color:#000;font-weight:400;">Configure registry policy processing</div><svg style="position:absolute;left:887px;top:578.6px" width="23" height="26" viewBox="0 0 23 26"><path d="M0.75 0.75H17V5.8H22.25V25.25H0.75Z" fill="#fff" stroke="#adadad" stroke-width="1.4"/>
 <rect x="16.2" y="1.4" width="6.6" height="5" fill="#bababa"/><rect x="18.2" y="2.9" width="2.4" height="2" fill="#fff"/>
 <path d="M0.75 25.1h21.5" stroke="#929292" stroke-width="1.6"/>
 <rect x="5.4" y="6.9" width="3.4" height="3.3" fill="#111"/>
 <rect x="5.4" y="11.9" width="3.4" height="3.2" fill="#8a86b8"/>
 <rect x="5.4" y="17.1" width="3.4" height="3.2" fill="#111"/>
 <rect x="10.8" y="8.6" width="7" height="1.3" fill="#7c78a8"/>
 <rect x="10.8" y="13.8" width="7" height="1.3" fill="#7c78a8"/>
 <rect x="10.8" y="19" width="7" height="1.3" fill="#7c78a8"/></svg><div class="t" style="left:918px;top:579.79px;font-size:20.3px;line-height:24.36px;color:#000;font-weight:400;">Configure Registry preference extension policy processing</div><svg style="position:absolute;left:887px;top:611.86px" width="23" height="26" viewBox="0 0 23 26"><path d="M0.75 0.75H17V5.8H22.25V25.25H0.75Z" fill="#fff" stroke="#adadad" stroke-width="1.4"/>
 <rect x="16.2" y="1.4" width="6.6" height="5" fill="#bababa"/><rect x="18.2" y="2.9" width="2.4" height="2" fill="#fff"/>
 <path d="M0.75 25.1h21.5" stroke="#929292" stroke-width="1.6"/>
 <rect x="5.4" y="6.9" width="3.4" height="3.3" fill="#111"/>
 <rect x="5.4" y="11.9" width="3.4" height="3.2" fill="#8a86b8"/>
 <rect x="5.4" y="17.1" width="3.4" height="3.2" fill="#111"/>
 <rect x="10.8" y="8.6" width="7" height="1.3" fill="#7c78a8"/>
 <rect x="10.8" y="13.8" width="7" height="1.3" fill="#7c78a8"/>
 <rect x="10.8" y="19" width="7" height="1.3" fill="#7c78a8"/></svg><div class="t" style="left:918px;top:613.05px;font-size:20.3px;line-height:24.36px;color:#000;font-weight:400;">Configure Scheduled Tasks preference extension policy processing</div><svg style="position:absolute;left:887px;top:645.12px" width="23" height="26" viewBox="0 0 23 26"><path d="M0.75 0.75H17V5.8H22.25V25.25H0.75Z" fill="#fff" stroke="#adadad" stroke-width="1.4"/>
 <rect x="16.2" y="1.4" width="6.6" height="5" fill="#bababa"/><rect x="18.2" y="2.9" width="2.4" height="2" fill="#fff"/>
 <path d="M0.75 25.1h21.5" stroke="#929292" stroke-width="1.6"/>
 <rect x="5.4" y="6.9" width="3.4" height="3.3" fill="#111"/>
 <rect x="5.4" y="11.9" width="3.4" height="3.2" fill="#8a86b8"/>
 <rect x="5.4" y="17.1" width="3.4" height="3.2" fill="#111"/>
 <rect x="10.8" y="8.6" width="7" height="1.3" fill="#7c78a8"/>
 <rect x="10.8" y="13.8" width="7" height="1.3" fill="#7c78a8"/>
 <rect x="10.8" y="19" width="7" height="1.3" fill="#7c78a8"/></svg><div class="t" style="left:918px;top:646.31px;font-size:20.3px;line-height:24.36px;color:#000;font-weight:400;">Configure scripts policy processing</div><svg style="position:absolute;left:887px;top:678.38px" width="23" height="26" viewBox="0 0 23 26"><path d="M0.75 0.75H17V5.8H22.25V25.25H0.75Z" fill="#fff" stroke="#adadad" stroke-width="1.4"/>
 <rect x="16.2" y="1.4" width="6.6" height="5" fill="#bababa"/><rect x="18.2" y="2.9" width="2.4" height="2" fill="#fff"/>
 <path d="M0.75 25.1h21.5" stroke="#929292" stroke-width="1.6"/>
 <rect x="5.4" y="6.9" width="3.4" height="3.3" fill="#111"/>
 <rect x="5.4" y="11.9" width="3.4" height="3.2" fill="#8a86b8"/>
 <rect x="5.4" y="17.1" width="3.4" height="3.2" fill="#111"/>
 <rect x="10.8" y="8.6" width="7" height="1.3" fill="#7c78a8"/>
 <rect x="10.8" y="13.8" width="7" height="1.3" fill="#7c78a8"/>
 <rect x="10.8" y="19" width="7" height="1.3" fill="#7c78a8"/></svg><div class="t" style="left:918px;top:679.57px;font-size:20.3px;line-height:24.36px;color:#000;font-weight:400;">Configure security policy processing</div><svg style="position:absolute;left:887px;top:711.64px" width="23" height="26" viewBox="0 0 23 26"><path d="M0.75 0.75H17V5.8H22.25V25.25H0.75Z" fill="#fff" stroke="#adadad" stroke-width="1.4"/>
 <rect x="16.2" y="1.4" width="6.6" height="5" fill="#bababa"/><rect x="18.2" y="2.9" width="2.4" height="2" fill="#fff"/>
 <path d="M0.75 25.1h21.5" stroke="#929292" stroke-width="1.6"/>
 <rect x="5.4" y="6.9" width="3.4" height="3.3" fill="#111"/>
 <rect x="5.4" y="11.9" width="3.4" height="3.2" fill="#8a86b8"/>
 <rect x="5.4" y="17.1" width="3.4" height="3.2" fill="#111"/>
 <rect x="10.8" y="8.6" width="7" height="1.3" fill="#7c78a8"/>
 <rect x="10.8" y="13.8" width="7" height="1.3" fill="#7c78a8"/>
 <rect x="10.8" y="19" width="7" height="1.3" fill="#7c78a8"/></svg><div class="t" style="left:918px;top:712.83px;font-size:20.3px;line-height:24.36px;color:#000;font-weight:400;">Configure Services preference extension policy processing</div><svg style="position:absolute;left:887px;top:744.9px" width="23" height="26" viewBox="0 0 23 26"><path d="M0.75 0.75H17V5.8H22.25V25.25H0.75Z" fill="#fff" stroke="#adadad" stroke-width="1.4"/>
 <rect x="16.2" y="1.4" width="6.6" height="5" fill="#bababa"/><rect x="18.2" y="2.9" width="2.4" height="2" fill="#fff"/>
 <path d="M0.75 25.1h21.5" stroke="#929292" stroke-width="1.6"/>
 <rect x="5.4" y="6.9" width="3.4" height="3.3" fill="#111"/>
 <rect x="5.4" y="11.9" width="3.4" height="3.2" fill="#8a86b8"/>
 <rect x="5.4" y="17.1" width="3.4" height="3.2" fill="#111"/>
 <rect x="10.8" y="8.6" width="7" height="1.3" fill="#7c78a8"/>
 <rect x="10.8" y="13.8" width="7" height="1.3" fill="#7c78a8"/>
 <rect x="10.8" y="19" width="7" height="1.3" fill="#7c78a8"/></svg><div class="t" style="left:918px;top:746.09px;font-size:20.3px;line-height:24.36px;color:#000;font-weight:400;">Configure Shortcuts preference extension policy processing</div><svg style="position:absolute;left:887px;top:778.16px" width="23" height="26" viewBox="0 0 23 26"><path d="M0.75 0.75H17V5.8H22.25V25.25H0.75Z" fill="#fff" stroke="#adadad" stroke-width="1.4"/>
 <rect x="16.2" y="1.4" width="6.6" height="5" fill="#bababa"/><rect x="18.2" y="2.9" width="2.4" height="2" fill="#fff"/>
 <path d="M0.75 25.1h21.5" stroke="#929292" stroke-width="1.6"/>
 <rect x="5.4" y="6.9" width="3.4" height="3.3" fill="#111"/>
 <rect x="5.4" y="11.9" width="3.4" height="3.2" fill="#8a86b8"/>
 <rect x="5.4" y="17.1" width="3.4" height="3.2" fill="#111"/>
 <rect x="10.8" y="8.6" width="7" height="1.3" fill="#7c78a8"/>
 <rect x="10.8" y="13.8" width="7" height="1.3" fill="#7c78a8"/>
 <rect x="10.8" y="19" width="7" height="1.3" fill="#7c78a8"/></svg><div class="t" style="left:918px;top:779.35px;font-size:20.3px;line-height:24.36px;color:#000;font-weight:400;">Configure software Installation policy processing</div><svg style="position:absolute;left:887px;top:811.42px" width="23" height="26" viewBox="0 0 23 26"><path d="M0.75 0.75H17V5.8H22.25V25.25H0.75Z" fill="#fff" stroke="#adadad" stroke-width="1.4"/>
 <rect x="16.2" y="1.4" width="6.6" height="5" fill="#bababa"/><rect x="18.2" y="2.9" width="2.4" height="2" fill="#fff"/>
 <path d="M0.75 25.1h21.5" stroke="#929292" stroke-width="1.6"/>
 <rect x="5.4" y="6.9" width="3.4" height="3.3" fill="#111"/>
 <rect x="5.4" y="11.9" width="3.4" height="3.2" fill="#8a86b8"/>
 <rect x="5.4" y="17.1" width="3.4" height="3.2" fill="#111"/>
 <rect x="10.8" y="8.6" width="7" height="1.3" fill="#7c78a8"/>
 <rect x="10.8" y="13.8" width="7" height="1.3" fill="#7c78a8"/>
 <rect x="10.8" y="19" width="7" height="1.3" fill="#7c78a8"/></svg><div class="t" style="left:918px;top:812.61px;font-size:20.3px;line-height:24.36px;color:#000;font-weight:400;">Configure Start Menu preference extension policy processing</div><svg style="position:absolute;left:887px;top:844.68px" width="23" height="26" viewBox="0 0 23 26"><path d="M0.75 0.75H17V5.8H22.25V25.25H0.75Z" fill="#fff" stroke="#adadad" stroke-width="1.4"/>
 <rect x="16.2" y="1.4" width="6.6" height="5" fill="#bababa"/><rect x="18.2" y="2.9" width="2.4" height="2" fill="#fff"/>
 <path d="M0.75 25.1h21.5" stroke="#929292" stroke-width="1.6"/>
 <rect x="5.4" y="6.9" width="3.4" height="3.3" fill="#111"/>
 <rect x="5.4" y="11.9" width="3.4" height="3.2" fill="#8a86b8"/>
 <rect x="5.4" y="17.1" width="3.4" height="3.2" fill="#111"/>
 <rect x="10.8" y="8.6" width="7" height="1.3" fill="#7c78a8"/>
 <rect x="10.8" y="13.8" width="7" height="1.3" fill="#7c78a8"/>
 <rect x="10.8" y="19" width="7" height="1.3" fill="#7c78a8"/></svg><div class="t" style="left:918px;top:845.87px;font-size:20.3px;line-height:24.36px;color:#000;font-weight:400;">Configure user Group Policy loopback processing mode</div><svg style="position:absolute;left:887px;top:877.9399999999999px" width="23" height="26" viewBox="0 0 23 26"><path d="M0.75 0.75H17V5.8H22.25V25.25H0.75Z" fill="#fff" stroke="#adadad" stroke-width="1.4"/>
 <rect x="16.2" y="1.4" width="6.6" height="5" fill="#bababa"/><rect x="18.2" y="2.9" width="2.4" height="2" fill="#fff"/>
 <path d="M0.75 25.1h21.5" stroke="#929292" stroke-width="1.6"/>
 <rect x="5.4" y="6.9" width="3.4" height="3.3" fill="#111"/>
 <rect x="5.4" y="11.9" width="3.4" height="3.2" fill="#8a86b8"/>
 <rect x="5.4" y="17.1" width="3.4" height="3.2" fill="#111"/>
 <rect x="10.8" y="8.6" width="7" height="1.3" fill="#7c78a8"/>
 <rect x="10.8" y="13.8" width="7" height="1.3" fill="#7c78a8"/>
 <rect x="10.8" y="19" width="7" height="1.3" fill="#7c78a8"/></svg><div class="t" style="left:918px;top:879.13px;font-size:20.3px;line-height:24.36px;color:#000;font-weight:400;">Configure web-to-app linking with app URI handlers</div><svg style="position:absolute;left:887px;top:911.1999999999999px" width="23" height="26" viewBox="0 0 23 26"><path d="M0.75 0.75H17V5.8H22.25V25.25H0.75Z" fill="#fff" stroke="#adadad" stroke-width="1.4"/>
 <rect x="16.2" y="1.4" width="6.6" height="5" fill="#bababa"/><rect x="18.2" y="2.9" width="2.4" height="2" fill="#fff"/>
 <path d="M0.75 25.1h21.5" stroke="#929292" stroke-width="1.6"/>
 <rect x="5.4" y="6.9" width="3.4" height="3.3" fill="#111"/>
 <rect x="5.4" y="11.9" width="3.4" height="3.2" fill="#8a86b8"/>
 <rect x="5.4" y="17.1" width="3.4" height="3.2" fill="#111"/>
 <rect x="10.8" y="8.6" width="7" height="1.3" fill="#7c78a8"/>
 <rect x="10.8" y="13.8" width="7" height="1.3" fill="#7c78a8"/>
 <rect x="10.8" y="19" width="7" height="1.3" fill="#7c78a8"/></svg><div class="t" style="left:918px;top:912.39px;font-size:20.3px;line-height:24.36px;color:#000;font-weight:400;">Configure wired policy processing</div><svg style="position:absolute;left:887px;top:944.4599999999999px" width="23" height="26" viewBox="0 0 23 26"><path d="M0.75 0.75H17V5.8H22.25V25.25H0.75Z" fill="#fff" stroke="#adadad" stroke-width="1.4"/>
 <rect x="16.2" y="1.4" width="6.6" height="5" fill="#bababa"/><rect x="18.2" y="2.9" width="2.4" height="2" fill="#fff"/>
 <path d="M0.75 25.1h21.5" stroke="#929292" stroke-width="1.6"/>
 <rect x="5.4" y="6.9" width="3.4" height="3.3" fill="#111"/>
 <rect x="5.4" y="11.9" width="3.4" height="3.2" fill="#8a86b8"/>
 <rect x="5.4" y="17.1" width="3.4" height="3.2" fill="#111"/>
 <rect x="10.8" y="8.6" width="7" height="1.3" fill="#7c78a8"/>
 <rect x="10.8" y="13.8" width="7" height="1.3" fill="#7c78a8"/>
 <rect x="10.8" y="19" width="7" height="1.3" fill="#7c78a8"/></svg><div class="t" style="left:918px;top:945.65px;font-size:20.3px;line-height:24.36px;color:#000;font-weight:400;">Configure wireless policy processing</div><svg style="position:absolute;left:887px;top:977.7199999999999px" width="23" height="26" viewBox="0 0 23 26"><path d="M0.75 0.75H17V5.8H22.25V25.25H0.75Z" fill="#fff" stroke="#adadad" stroke-width="1.4"/>
 <rect x="16.2" y="1.4" width="6.6" height="5" fill="#bababa"/><rect x="18.2" y="2.9" width="2.4" height="2" fill="#fff"/>
 <path d="M0.75 25.1h21.5" stroke="#929292" stroke-width="1.6"/>
 <rect x="5.4" y="6.9" width="3.4" height="3.3" fill="#111"/>
 <rect x="5.4" y="11.9" width="3.4" height="3.2" fill="#8a86b8"/>
 <rect x="5.4" y="17.1" width="3.4" height="3.2" fill="#111"/>
 <rect x="10.8" y="8.6" width="7" height="1.3" fill="#7c78a8"/>
 <rect x="10.8" y="13.8" width="7" height="1.3" fill="#7c78a8"/>
 <rect x="10.8" y="19" width="7" height="1.3" fill="#7c78a8"/></svg><div class="t" style="left:918px;top:978.91px;font-size:20.3px;line-height:24.36px;color:#000;font-weight:400;">Continue experiences on this device</div><svg style="position:absolute;left:887px;top:1010.9799999999999px" width="23" height="26" viewBox="0 0 23 26"><path d="M0.75 0.75H17V5.8H22.25V25.25H0.75Z" fill="#fff" stroke="#adadad" stroke-width="1.4"/>
 <rect x="16.2" y="1.4" width="6.6" height="5" fill="#bababa"/><rect x="18.2" y="2.9" width="2.4" height="2" fill="#fff"/>
 <path d="M0.75 25.1h21.5" stroke="#929292" stroke-width="1.6"/>
 <rect x="5.4" y="6.9" width="3.4" height="3.3" fill="#111"/>
 <rect x="5.4" y="11.9" width="3.4" height="3.2" fill="#8a86b8"/>
 <rect x="5.4" y="17.1" width="3.4" height="3.2" fill="#111"/>
 <rect x="10.8" y="8.6" width="7" height="1.3" fill="#7c78a8"/>
 <rect x="10.8" y="13.8" width="7" height="1.3" fill="#7c78a8"/>
 <rect x="10.8" y="19" width="7" height="1.3" fill="#7c78a8"/></svg><div class="t" style="left:918px;top:1012.17px;font-size:20.3px;line-height:24.36px;color:#000;font-weight:400;">Determine if interactive users can generate Resultant Set of Policy data</div><svg style="position:absolute;left:887px;top:1044.2399999999998px" width="23" height="26" viewBox="0 0 23 26"><path d="M0.75 0.75H17V5.8H22.25V25.25H0.75Z" fill="#fff" stroke="#adadad" stroke-width="1.4"/>
 <rect x="16.2" y="1.4" width="6.6" height="5" fill="#bababa"/><rect x="18.2" y="2.9" width="2.4" height="2" fill="#fff"/>
 <path d="M0.75 25.1h21.5" stroke="#929292" stroke-width="1.6"/>
 <rect x="5.4" y="6.9" width="3.4" height="3.3" fill="#111"/>
 <rect x="5.4" y="11.9" width="3.4" height="3.2" fill="#8a86b8"/>
 <rect x="5.4" y="17.1" width="3.4" height="3.2" fill="#111"/>
 <rect x="10.8" y="8.6" width="7" height="1.3" fill="#7c78a8"/>
 <rect x="10.8" y="13.8" width="7" height="1.3" fill="#7c78a8"/>
 <rect x="10.8" y="19" width="7" height="1.3" fill="#7c78a8"/></svg><div class="t" style="left:918px;top:1045.43px;font-size:20.3px;line-height:24.36px;color:#000;font-weight:400;">Enable AD/DFS domain controller synchronization during policy refresh</div><svg style="position:absolute;left:887px;top:1077.5px" width="23" height="26" viewBox="0 0 23 26"><path d="M0.75 0.75H17V5.8H22.25V25.25H0.75Z" fill="#fff" stroke="#adadad" stroke-width="1.4"/>
 <rect x="16.2" y="1.4" width="6.6" height="5" fill="#bababa"/><rect x="18.2" y="2.9" width="2.4" height="2" fill="#fff"/>
 <path d="M0.75 25.1h21.5" stroke="#929292" stroke-width="1.6"/>
 <rect x="5.4" y="6.9" width="3.4" height="3.3" fill="#111"/>
 <rect x="5.4" y="11.9" width="3.4" height="3.2" fill="#8a86b8"/>
 <rect x="5.4" y="17.1" width="3.4" height="3.2" fill="#111"/>
 <rect x="10.8" y="8.6" width="7" height="1.3" fill="#7c78a8"/>
 <rect x="10.8" y="13.8" width="7" height="1.3" fill="#7c78a8"/>
 <rect x="10.8" y="19" width="7" height="1.3" fill="#7c78a8"/></svg><div class="t" style="left:918px;top:1078.69px;font-size:20.3px;line-height:24.36px;color:#000;font-weight:400;">Enable Group Policy Caching for Servers</div><svg style="position:absolute;left:887px;top:1110.7599999999998px" width="23" height="26" viewBox="0 0 23 26"><path d="M0.75 0.75H17V5.8H22.25V25.25H0.75Z" fill="#fff" stroke="#adadad" stroke-width="1.4"/>
 <rect x="16.2" y="1.4" width="6.6" height="5" fill="#bababa"/><rect x="18.2" y="2.9" width="2.4" height="2" fill="#fff"/>
 <path d="M0.75 25.1h21.5" stroke="#929292" stroke-width="1.6"/>
 <rect x="5.4" y="6.9" width="3.4" height="3.3" fill="#111"/>
 <rect x="5.4" y="11.9" width="3.4" height="3.2" fill="#8a86b8"/>
 <rect x="5.4" y="17.1" width="3.4" height="3.2" fill="#111"/>
 <rect x="10.8" y="8.6" width="7" height="1.3" fill="#7c78a8"/>
 <rect x="10.8" y="13.8" width="7" height="1.3" fill="#7c78a8"/>
 <rect x="10.8" y="19" width="7" height="1.3" fill="#7c78a8"/></svg><div class="t" style="left:918px;top:1111.95px;font-size:20.3px;line-height:24.36px;color:#000;font-weight:400;">Phone-PC linking on this device</div><svg style="position:absolute;left:887px;top:1144.02px" width="23" height="26" viewBox="0 0 23 26"><path d="M0.75 0.75H17V5.8H22.25V25.25H0.75Z" fill="#fff" stroke="#adadad" stroke-width="1.4"/>
 <rect x="16.2" y="1.4" width="6.6" height="5" fill="#bababa"/><rect x="18.2" y="2.9" width="2.4" height="2" fill="#fff"/>
 <path d="M0.75 25.1h21.5" stroke="#929292" stroke-width="1.6"/>
 <rect x="5.4" y="6.9" width="3.4" height="3.3" fill="#111"/>
 <rect x="5.4" y="11.9" width="3.4" height="3.2" fill="#8a86b8"/>
 <rect x="5.4" y="17.1" width="3.4" height="3.2" fill="#111"/>
 <rect x="10.8" y="8.6" width="7" height="1.3" fill="#7c78a8"/>
 <rect x="10.8" y="13.8" width="7" height="1.3" fill="#7c78a8"/>
 <rect x="10.8" y="19" width="7" height="1.3" fill="#7c78a8"/></svg><div class="t" style="left:918px;top:1145.21px;font-size:20.3px;line-height:24.36px;color:#000;font-weight:400;">Remove users' ability to invoke machine policy refresh</div><svg style="position:absolute;left:887px;top:1177.2799999999997px" width="23" height="26" viewBox="0 0 23 26"><path d="M0.75 0.75H17V5.8H22.25V25.25H0.75Z" fill="#fff" stroke="#adadad" stroke-width="1.4"/>
 <rect x="16.2" y="1.4" width="6.6" height="5" fill="#bababa"/><rect x="18.2" y="2.9" width="2.4" height="2" fill="#fff"/>
 <path d="M0.75 25.1h21.5" stroke="#929292" stroke-width="1.6"/>
 <rect x="5.4" y="6.9" width="3.4" height="3.3" fill="#111"/>
 <rect x="5.4" y="11.9" width="3.4" height="3.2" fill="#8a86b8"/>
 <rect x="5.4" y="17.1" width="3.4" height="3.2" fill="#111"/>
 <rect x="10.8" y="8.6" width="7" height="1.3" fill="#7c78a8"/>
 <rect x="10.8" y="13.8" width="7" height="1.3" fill="#7c78a8"/>
 <rect x="10.8" y="19" width="7" height="1.3" fill="#7c78a8"/></svg><div class="t" style="left:918px;top:1178.47px;font-size:20.3px;line-height:24.36px;color:#000;font-weight:400;">Set Group Policy refresh interval for computers</div><svg style="position:absolute;left:887px;top:1210.54px" width="23" height="26" viewBox="0 0 23 26"><path d="M0.75 0.75H17V5.8H22.25V25.25H0.75Z" fill="#fff" stroke="#adadad" stroke-width="1.4"/>
 <rect x="16.2" y="1.4" width="6.6" height="5" fill="#bababa"/><rect x="18.2" y="2.9" width="2.4" height="2" fill="#fff"/>
 <path d="M0.75 25.1h21.5" stroke="#929292" stroke-width="1.6"/>
 <rect x="5.4" y="6.9" width="3.4" height="3.3" fill="#111"/>
 <rect x="5.4" y="11.9" width="3.4" height="3.2" fill="#8a86b8"/>
 <rect x="5.4" y="17.1" width="3.4" height="3.2" fill="#111"/>
 <rect x="10.8" y="8.6" width="7" height="1.3" fill="#7c78a8"/>
 <rect x="10.8" y="13.8" width="7" height="1.3" fill="#7c78a8"/>
 <rect x="10.8" y="19" width="7" height="1.3" fill="#7c78a8"/></svg><div class="t" style="left:918px;top:1211.73px;font-size:20.3px;line-height:24.36px;color:#000;font-weight:400;">Set Group Policy refresh interval for domain controllers</div><div style="left:913px;top:1240.1999999999998px;width:490px;height:32px;background:#f0f0f0"></div><svg style="position:absolute;left:887px;top:1243.7999999999997px" width="23" height="26" viewBox="0 0 23 26"><path d="M0.75 0.75h15.5l6 6v18.5h-21.5z" fill="#7fb0e6" stroke="#3f7fc9" stroke-width="1.5"/>
 <path d="M16.2 0.75v5.8h6" fill="#a9c8ee" stroke="#4f88cc" stroke-width="1.2"/>
 <rect x="5.2" y="6.8" width="3.4" height="3.4" fill="#12325a"/>
 <rect x="5.2" y="11.8" width="3.4" height="3.4" fill="#2a4f88"/>
 <rect x="5.2" y="16.8" width="3.4" height="3.4" fill="#12325a"/>
 <rect x="10.5" y="7.8" width="7" height="1.3" fill="#2e4f8c"/>
 <rect x="10.5" y="12.8" width="7" height="1.3" fill="#2e4f8c"/>
 <rect x="10.5" y="17.8" width="7" height="1.3" fill="#2e4f8c"/></svg><div class="t" style="left:918px;top:1244.99px;font-size:20.3px;line-height:24.36px;color:#000;font-weight:400;">Specify startup policy processing wait time</div><svg style="position:absolute;left:887px;top:1277.06px" width="23" height="26" viewBox="0 0 23 26"><path d="M0.75 0.75H17V5.8H22.25V25.25H0.75Z" fill="#fff" stroke="#adadad" stroke-width="1.4"/>
 <rect x="16.2" y="1.4" width="6.6" height="5" fill="#bababa"/><rect x="18.2" y="2.9" width="2.4" height="2" fill="#fff"/>
 <path d="M0.75 25.1h21.5" stroke="#929292" stroke-width="1.6"/>
 <rect x="5.4" y="6.9" width="3.4" height="3.3" fill="#111"/>
 <rect x="5.4" y="11.9" width="3.4" height="3.2" fill="#8a86b8"/>
 <rect x="5.4" y="17.1" width="3.4" height="3.2" fill="#111"/>
 <rect x="10.8" y="8.6" width="7" height="1.3" fill="#7c78a8"/>
 <rect x="10.8" y="13.8" width="7" height="1.3" fill="#7c78a8"/>
 <rect x="10.8" y="19" width="7" height="1.3" fill="#7c78a8"/></svg><div class="t" style="left:918px;top:1278.25px;font-size:20.3px;line-height:24.36px;color:#000;font-weight:400;">Specify workplace connectivity wait time for policy processing</div><svg style="position:absolute;left:887px;top:1310.3199999999997px" width="23" height="26" viewBox="0 0 23 26"><path d="M0.75 0.75H17V5.8H22.25V25.25H0.75Z" fill="#fff" stroke="#adadad" stroke-width="1.4"/>
 <rect x="16.2" y="1.4" width="6.6" height="5" fill="#bababa"/><rect x="18.2" y="2.9" width="2.4" height="2" fill="#fff"/>
 <path d="M0.75 25.1h21.5" stroke="#929292" stroke-width="1.6"/>
 <rect x="5.4" y="6.9" width="3.4" height="3.3" fill="#111"/>
 <rect x="5.4" y="11.9" width="3.4" height="3.2" fill="#8a86b8"/>
 <rect x="5.4" y="17.1" width="3.4" height="3.2" fill="#111"/>
 <rect x="10.8" y="8.6" width="7" height="1.3" fill="#7c78a8"/>
 <rect x="10.8" y="13.8" width="7" height="1.3" fill="#7c78a8"/>
 <rect x="10.8" y="19" width="7" height="1.3" fill="#7c78a8"/></svg><div class="t" style="left:918px;top:1311.51px;font-size:20.3px;line-height:24.36px;color:#000;font-weight:400;">Turn off background refresh of Group Policy</div><svg style="position:absolute;left:887px;top:1343.58px" width="23" height="26" viewBox="0 0 23 26"><path d="M0.75 0.75H17V5.8H22.25V25.25H0.75Z" fill="#fff" stroke="#adadad" stroke-width="1.4"/>
 <rect x="16.2" y="1.4" width="6.6" height="5" fill="#bababa"/><rect x="18.2" y="2.9" width="2.4" height="2" fill="#fff"/>
 <path d="M0.75 25.1h21.5" stroke="#929292" stroke-width="1.6"/>
 <rect x="5.4" y="6.9" width="3.4" height="3.3" fill="#111"/>
 <rect x="5.4" y="11.9" width="3.4" height="3.2" fill="#8a86b8"/>
 <rect x="5.4" y="17.1" width="3.4" height="3.2" fill="#111"/>
 <rect x="10.8" y="8.6" width="7" height="1.3" fill="#7c78a8"/>
 <rect x="10.8" y="13.8" width="7" height="1.3" fill="#7c78a8"/>
 <rect x="10.8" y="19" width="7" height="1.3" fill="#7c78a8"/></svg><div class="t" style="left:918px;top:1344.77px;font-size:20.3px;line-height:24.36px;color:#000;font-weight:400;">Turn off Group Policy Client Service AOAC optimization</div><svg style="position:absolute;left:887px;top:1376.8399999999997px" width="23" height="26" viewBox="0 0 23 26"><path d="M0.75 0.75H17V5.8H22.25V25.25H0.75Z" fill="#fff" stroke="#adadad" stroke-width="1.4"/>
 <rect x="16.2" y="1.4" width="6.6" height="5" fill="#bababa"/><rect x="18.2" y="2.9" width="2.4" height="2" fill="#fff"/>
 <path d="M0.75 25.1h21.5" stroke="#929292" stroke-width="1.6"/>
 <rect x="5.4" y="6.9" width="3.4" height="3.3" fill="#111"/>
 <rect x="5.4" y="11.9" width="3.4" height="3.2" fill="#8a86b8"/>
 <rect x="5.4" y="17.1" width="3.4" height="3.2" fill="#111"/>
 <rect x="10.8" y="8.6" width="7" height="1.3" fill="#7c78a8"/>
 <rect x="10.8" y="13.8" width="7" height="1.3" fill="#7c78a8"/>
 <rect x="10.8" y="19" width="7" height="1.3" fill="#7c78a8"/></svg><div class="t" style="left:918px;top:1378.03px;font-size:20.3px;line-height:24.36px;color:#000;font-weight:400;">Turn off Local Group Policy Objects processing</div><svg style="position:absolute;left:887px;top:1410.1px" width="23" height="26" viewBox="0 0 23 26"><path d="M0.75 0.75H17V5.8H22.25V25.25H0.75Z" fill="#fff" stroke="#adadad" stroke-width="1.4"/>
 <rect x="16.2" y="1.4" width="6.6" height="5" fill="#bababa"/><rect x="18.2" y="2.9" width="2.4" height="2" fill="#fff"/>
 <path d="M0.75 25.1h21.5" stroke="#929292" stroke-width="1.6"/>
 <rect x="5.4" y="6.9" width="3.4" height="3.3" fill="#111"/>
 <rect x="5.4" y="11.9" width="3.4" height="3.2" fill="#8a86b8"/>
 <rect x="5.4" y="17.1" width="3.4" height="3.2" fill="#111"/>
 <rect x="10.8" y="8.6" width="7" height="1.3" fill="#7c78a8"/>
 <rect x="10.8" y="13.8" width="7" height="1.3" fill="#7c78a8"/>
 <rect x="10.8" y="19" width="7" height="1.3" fill="#7c78a8"/></svg><div class="t" style="left:918px;top:1411.29px;font-size:20.3px;line-height:24.36px;color:#000;font-weight:400;">Turn off Resultant Set of Policy logging</div><div style="left:876px;top:1235.3px;width:499.6px;height:39.4px;border:2.4px solid #f01010;box-sizing:border-box;box-shadow:2px 3px 3px rgba(0,0,0,0.3), inset 1.5px 1.5px 2px rgba(0,0,0,0.22)"></div><div style="left:1403px;top:331px;width:1199px;height:1112px;background:#f0f0f0;border:1px solid #707070;border-bottom:none;box-sizing:border-box"></div><div style="left:1404px;top:332px;width:1197px;height:54px;background:#fff"></div><svg style="position:absolute;left:1417px;top:345px;" width="29" height="27" viewBox="0 0 29 27"><defs><linearGradient id="mon" x1="0" y1="0" x2="1" y2="0.6"><stop offset="0" stop-color="#0010d8"/><stop offset="0.45" stop-color="#1030e0"/><stop offset="1" stop-color="#b8d0ff"/></linearGradient></defs>
<rect x="6.5" y="0.5" width="21" height="18" rx="1" fill="#d6d6cf"/><rect x="8.5" y="3" width="16.5" height="12.5" fill="url(#mon)"/>
<path d="M15 18.5h7l2.5 4h-12z" fill="#b9b9b4"/>
<path d="M0.5 26.5c0-6 2.5-9.5 6.5-9.5s7 3.5 7 9.5z" fill="#8fbbe2"/>
<ellipse cx="6.8" cy="10.5" rx="4.2" ry="5" fill="#c28a5c"/><path d="M2.6 9.5c0-4 2-6 4.2-6s4.2 2 4.2 6c-1-2-2.5-2.5-4.2-2.5s-3.2 0.5-4.2 2.5z" fill="#555"/>
</svg><div class="t" style="left:1451px;top:347.27px;font-size:20.85px;line-height:25.02px;color:#000;font-weight:400;">Specify startup policy processing wait time</div><div style="left:2391px;top:358px;width:15px;height:1px;background:#c8c8c8"></div><div style="left:2472px;top:351px;width:15px;height:15px;border:1.3px solid #111;box-sizing:border-box"></div><svg style="position:absolute;left:2551px;top:350px;" width="18" height="18" viewBox="0 0 18 18"><path d="M1.5 1.5L16.5 16.5M16.5 1.5L1.5 16.5" stroke="#111" stroke-width="1.4"/></svg><svg style="position:absolute;left:1414px;top:410px;" width="29" height="29" viewBox="0 0 29 29"><defs><linearGradient id="tb" x1="0" y1="0" x2="0" y2="1"><stop offset="0" stop-color="#7f84b8"/><stop offset="1" stop-color="#b4b8d8"/></linearGradient>
<radialGradient id="cd"><stop offset="0.15" stop-color="#fff"/><stop offset="0.5" stop-color="#f0e8f4"/><stop offset="0.8" stop-color="#d8f0d8"/><stop offset="1" stop-color="#c8d0f0"/></radialGradient></defs>
<rect x="0" y="0" width="29" height="28.5" fill="#5c5c5c"/>
<rect x="0" y="0" width="5.5" height="9" fill="#0a8a8a"/><rect x="23.5" y="0" width="5.5" height="9" fill="#0a8a8a"/><rect x="23.5" y="19" width="5.5" height="9.5" fill="#0a8a8a"/>
<rect x="5.5" y="1" width="18" height="4.5" fill="url(#tb)"/><rect x="5.5" y="5.5" width="18" height="1.2" fill="#fff"/>
<rect x="5.5" y="6.8" width="11" height="2.6" fill="#4f8a55"/><rect x="16.5" y="6.8" width="7" height="2.6" fill="#f3c21e"/>
<rect x="1.8" y="10" width="25.4" height="16.8" fill="#d4d4d4"/>
<circle cx="9" cy="18.3" r="6.8" fill="url(#cd)"/><circle cx="9" cy="18.3" r="1.6" fill="#333"/>
<rect x="15.5" y="11.2" width="9.8" height="14" fill="#f7e9a6"/><rect x="17.2" y="14.5" width="6" height="1.3" fill="#8a8a8a"/><rect x="17.2" y="18" width="6" height="1.3" fill="#8a8a8a"/><rect x="17" y="22.5" width="7" height="1.2" fill="#d9c070"/>
</svg><div class="t" style="left:1456px;top:407.87px;font-size:20.85px;line-height:25.02px;color:#000;font-weight:400;">Specify startup policy processing wait time</div><div class="btn" style="left:2060px;top:412.5px;width:177px;height:45px;border:1px solid #adadad;font-size:20.3px;line-height:43px">Previous Setting</div><div class="btn" style="left:2251.4px;top:412.5px;width:176px;height:45px;border:1px solid #adadad;font-size:20.3px;line-height:43px">Next Setting</div><div style="left:1420px;top:493px;width:22px;height:22px;border-radius:50%;border:1.75px solid #333;box-sizing:border-box;background:#fff"></div><div class="t" style="left:1450.6px;top:492.58px;font-size:20.2px;line-height:24.24px;color:#000;font-weight:400;">Not Configured</div><div style="left:1420px;top:542px;width:22px;height:22px;border-radius:50%;border:1.75px solid #333;box-sizing:border-box;background:#fff"></div><div style="left:1425.5px;top:547.5px;width:11px;height:11px;border-radius:50%;background:#333"></div><div class="t" style="left:1450.6px;top:541.88px;font-size:20.2px;line-height:24.24px;color:#000;font-weight:400;">Enabled</div><div style="left:1420px;top:591px;width:22px;height:22px;border-radius:50%;border:1.75px solid #333;box-sizing:border-box;background:#fff"></div><div class="t" style="left:1450.6px;top:590.08px;font-size:20.2px;line-height:24.24px;color:#000;font-weight:400;">Disabled</div><div style="left:1411.4px;top:527.8px;width:126.6px;height:44px;border:2.4px solid #f01010;box-sizing:border-box;box-shadow:2px 3px 3px rgba(0,0,0,0.3), inset 1.5px 1.5px 2px rgba(0,0,0,0.22)"></div><div class="t" style="left:1633.4px;top:483.20px;font-size:20.6px;line-height:24.72px;color:#000;font-weight:400;">Comment:</div><div style="left:1783.6px;top:486px;width:801px;height:125.5px;background:#fff;border:1px solid #adadad;box-sizing:border-box"></div><div style="left:2552.7px;top:489.6px;width:29.7px;height:117.4px;background:#f0f0f0"></div><svg style="position:absolute;left:2559.5px;top:500px" width="16" height="10" viewBox="0 0 16 10"><path d="M3 8l5-5l5 5" fill="none" stroke="#c4c4c4" stroke-width="2.2"/></svg><svg style="position:absolute;left:2559.5px;top:587px" width="16" height="10" viewBox="0 0 16 10"><path d="M3 2l5 5l5-5" fill="none" stroke="#c4c4c4" stroke-width="2.2"/></svg><div class="t" style="left:1633px;top:620.01px;font-size:20.7px;line-height:24.84px;color:#000;font-weight:400;">Supported on:</div><div style="left:1784px;top:622.8px;width:800.4px;height:79.2px;background:#f0f0f0;border:1px solid #adadad;box-sizing:border-box"></div><svg style="position:absolute;left:2559.5px;top:636px" width="16" height="10" viewBox="0 0 16 10"><path d="M3 8l5-5l5 5" fill="none" stroke="#c4c4c4" stroke-width="2.2"/></svg><svg style="position:absolute;left:2559.5px;top:679px" width="16" height="10" viewBox="0 0 16 10"><path d="M3 2l5 5l5-5" fill="none" stroke="#c4c4c4" stroke-width="2.2"/></svg><div class="t" style="left:1795px;top:630.19px;font-size:20.3px;line-height:24.36px;color:#000;font-weight:400;">At least Windows Vista</div><div class="t" style="left:1412.8px;top:726.10px;font-size:20.6px;line-height:24.72px;color:#000;font-weight:400;">Options:</div><div class="t" style="left:1948.6px;top:726.10px;font-size:20.6px;line-height:24.72px;color:#000;font-weight:400;">Help:</div><div style="left:1409.8px;top:788.5px;width:520.6px;height:564px;background:#fff;border:1.8px solid #6e6e6e;box-sizing:border-box"></div><div class="t" style="left:1419.8px;top:800.03px;font-size:21.1px;line-height:25.32px;color:#000;font-weight:400;">Amount of time to wait (in seconds):</div><div style="left:1416px;top:840.8px;width:210px;height:40.1px;background:#fff;border:1.5px solid #a9adb5;box-sizing:border-box"></div><div class="t" style="left:1420.3px;top:849.24px;font-size:19.4px;line-height:23.28px;color:#000;font-weight:400;">120</div><div style="left:1597px;top:844px;width:26.5px;height:16.2px;background:#ebebeb;border:1px solid #cdcdcd;box-sizing:border-box"></div><div style="left:1597px;top:860.4px;width:26.5px;height:16px;background:#ebebeb;border:1px solid #cdcdcd;box-sizing:border-box"></div><svg style="position:absolute;left:1605px;top:846.5px;" width="10" height="6" viewBox="0 0 10 6"><path d="M0.5 5.5L5 0.5L9.5 5.5z" fill="#111"/></svg><svg style="position:absolute;left:1605px;top:863.6px;" width="10" height="6" viewBox="0 0 10 6"><path d="M0.5 0.5L5 5.5L9.5 0.5z" fill="#111"/></svg><div style="left:1411px;top:832.9px;width:222px;height:53.1px;border:2.4px solid #f01010;box-sizing:border-box;box-shadow:2px 3px 3px rgba(0,0,0,0.3), inset 1.5px 1.5px 2px rgba(0,0,0,0.22)"></div><div style="left:1945.3px;top:788.5px;width:617px;height:564px;background:#fff;border:1.8px solid #6e6e6e;box-sizing:border-box"></div><svg style="position:absolute;left:2569px;top:799px" width="16" height="10" viewBox="0 0 16 10"><path d="M3 8l5-5l5 5" fill="none" stroke="#c4c4c4" stroke-width="2.2"/></svg><svg style="position:absolute;left:2569px;top:1332px" width="16" height="10" viewBox="0 0 16 10"><path d="M3 2l5 5l5-5" fill="none" stroke="#c4c4c4" stroke-width="2.2"/></svg><div class="t" style="left:1954.3px;top:793.84px;font-size:20.7px;line-height:27.98px;color:#000;">This policy setting specifies how long Group Policy should wait for<br>network availability notifications during startup policy processing.<br>If the startup policy processing is synchronous, the computer is<br>blocked until the network is available or the default wait time is<br>reached. If the startup policy processing is asynchronous, the<br>computer is not blocked and policy processing will occur in the<br>background. In either case, configuring this policy setting<br>overrides any system-computed wait times.<br>&nbsp;<br>If you enable this policy setting, Group Policy will use this<br>administratively configured maximum wait time and override any<br>default or system-computed wait time.<br>&nbsp;<br>If you disable or do not configure this policy setting, Group Policy<br>will use the default wait time of 30 seconds on computers running<br>Windows Vista operating system.</div><div class="btn" style="left:2172.7px;top:1381px;width:126.7px;height:44px;border:2px solid #0078d7;font-size:20.6px;line-height:40px">OK</div><div class="btn" style="left:2314.6px;top:1381px;width:126.4px;height:44px;border:1px solid #adadad;font-size:20.6px;line-height:42px">Cancel</div><div class="btn" style="left:2456px;top:1381px;width:127px;height:44px;border:1px solid #adadad;font-size:20.6px;line-height:42px">Apply</div>
</body></html>
